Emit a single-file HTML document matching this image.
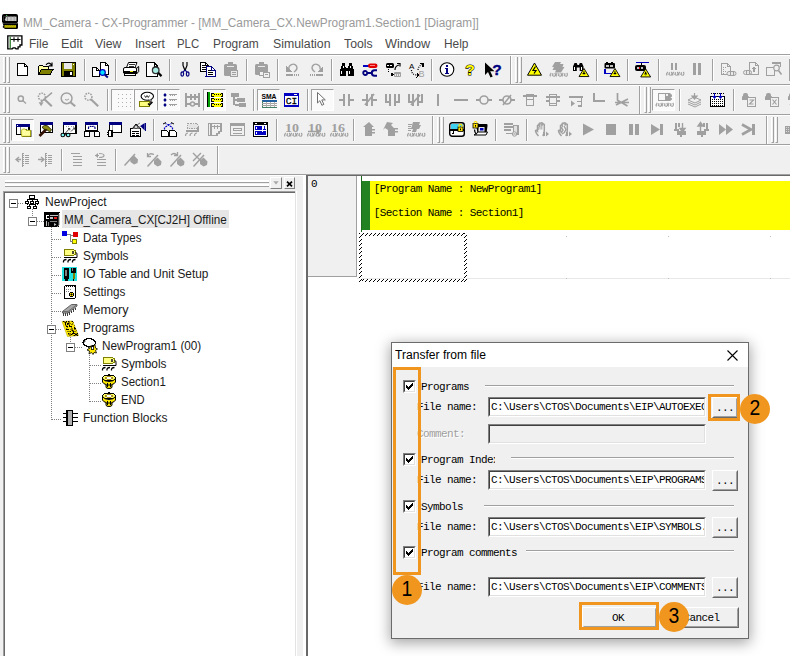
<!DOCTYPE html>
<html><head><meta charset="utf-8"><title>CX-Programmer</title><style>
*{margin:0;padding:0;box-sizing:border-box}
html,body{width:790px;height:656px;overflow:hidden;background:#f0f0f0}
body{position:relative;font-family:"Liberation Sans",sans-serif;font-size:12px;color:#000}
.a{position:absolute}
.t{position:absolute;white-space:nowrap;transform-origin:0 0;line-height:1}
.m{font-family:"Liberation Mono",monospace;font-size:11px;transform:scaleY(1.05);transform-origin:0 0;letter-spacing:-0.6px;white-space:pre;position:absolute;line-height:12px}
svg{position:absolute;overflow:visible}
.grip{position:absolute;width:3px;border-left:1px solid #fff;border-right:1px solid #a0a0a0;border-bottom:1px solid #a0a0a0;background:#f0f0f0}
.sep{position:absolute;width:2px;height:22px;border-left:1px solid #a0a0a0;border-right:1px solid #fff}
.chk{position:absolute;width:23px;height:22px;background:#fafafa;border:1px solid;border-color:#a0a0a0 #fff #fff #a0a0a0}
</style></head><body>
<div class="a" style="left:0px;top:0px;width:790px;height:53px;background:#fff"></div>
<div class="a" style="left:0px;top:53px;width:790px;height:1px;background:#fff"></div>
<div class="a" style="left:0px;top:54px;width:790px;height:1px;background:#a0a0a0"></div>
<div class="a" style="left:0px;top:55px;width:790px;height:1px;background:#fff"></div>
<svg style="left:2px;top:14px" width="16" height="16" viewBox="0 0 16 16"><rect x="0" y="0" width="16" height="9.3" rx="2" fill="#000"/><rect x="1.5" y="2.6" width="13" height="4.4" fill="#c8c8c8"/><rect x="5" y="2.6" width="1" height="4.4" fill="#8c8c8c"/><rect x="8.5" y="2.6" width="1" height="4.4" fill="#a4a4a4"/><rect x="11.7" y="2.6" width="1" height="4.4" fill="#a4a4a4"/><path d="M1.5 2.6h2.2v1.5l-1 1.5l1 1.400h-2.200z" fill="#000"/><rect x="4" y="1" width="1.200" height="1" fill="#50c050"/><path d="M.5 9.300h15.500v4.200q0 1.500-1.500 1.500h-11.500l-2.500-2l1-1.500z" fill="#000"/><rect x="2.500" y="11.200" width="11.500" height="2.400" fill="#e4dc00"/><path d="M3 13.600l2-2.400M5 13.600l2-2.400M7 13.600l2-2.400M9 13.600l2-2.400M11 13.600l2-2.400M13 13.600l1-1.200" stroke="#6a6400" stroke-width=".7"/></svg>
<svg style="left:7px;top:35px" width="16" height="16" viewBox="0 0 16 16"><path d="M.8 .8h14.100v9.200h-1.900v1.900h-1.900v1.900h-2.100l-.9-.9h-2l-.9.900h-4.400z" fill="#fff" stroke="#000" stroke-width="1.350"/><rect x="2.600" y="1.800" width="1.200" height="11.700" fill="#1c701c"/><path d="M3.700 4.500h9.800M7 2.300v4.400M11 2.300v4.400" stroke="#000" stroke-width="1.100" fill="none"/></svg>
<div class="a" style="left:0px;top:84px;width:790px;height:1px;background:#a0a0a0"></div>
<div class="a" style="left:0px;top:85px;width:790px;height:1px;background:#fff"></div>
<div class="a" style="left:0px;top:114px;width:790px;height:1px;background:#a0a0a0"></div>
<div class="a" style="left:0px;top:115px;width:790px;height:1px;background:#fff"></div>
<div class="a" style="left:0px;top:144px;width:790px;height:1px;background:#a0a0a0"></div>
<div class="a" style="left:0px;top:145px;width:790px;height:1px;background:#fff"></div>
<div class="a" style="left:0px;top:174px;width:790px;height:1px;background:#a0a0a0"></div>
<div class="a" style="left:0px;top:175px;width:790px;height:1px;background:#fff"></div>
<div class="grip" style="left:3px;top:57px;height:26px"></div>
<div class="grip" style="left:7px;top:57px;height:26px"></div>
<svg style="left:14.5px;top:62px" width="16" height="16" viewBox="0 0 16 16" ><path d="M2.5 1.5h7l3 3v9h-10z" stroke="#000" fill="#fff" stroke-width="1"  shape-rendering="crispEdges"/><path d="M9.5 1.5v3h3" stroke="#000" fill="none" stroke-width="1"  shape-rendering="crispEdges"/></svg>
<svg style="left:37.5px;top:62px" width="16" height="16" viewBox="0 0 16 16" ><path d="M.5 12.5v-8l1-1h3l1 1h5v2.5" stroke="#000" fill="#ffffa0" stroke-width="1"  shape-rendering="crispEdges"/><path d="M.5 12.5l3.2-5.5h11.8l-3.5 5.5z" stroke="#000" fill="#808000" stroke-width="1"  shape-rendering="crispEdges"/><path d="M8 2.800q3-3.500 5.500 .2M10.800 3.800h3.200v-3.200" stroke="#000" fill="none" stroke-width="1.2" shape-rendering="geometricPrecision"/></svg>
<svg style="left:60.5px;top:62px" width="16" height="16" viewBox="0 0 16 16" ><rect x="0" y="0" width="15" height="15" fill="#000" shape-rendering="crispEdges"/><rect x="1" y="1" width="13" height="13" fill="#808000" shape-rendering="crispEdges"/><rect x="3" y="1" width="8" height="6" fill="#e8e8e8" shape-rendering="crispEdges"/><rect x="3" y="9" width="9" height="5" fill="#000" shape-rendering="crispEdges"/><rect x="9" y="10" width="2" height="3" fill="#fff" shape-rendering="crispEdges"/><rect x="12" y="2" width="1" height="1" fill="#fff" shape-rendering="crispEdges"/></svg>
<div class="sep" style="left:84px;top:59px"></div>
<svg style="left:91.5px;top:62px" width="16" height="16" viewBox="0 0 16 16" ><path d="M8.5 .5h5l2.5 2.5v9.5h-7.5z" stroke="#000" fill="#fff" stroke-width="1"  shape-rendering="crispEdges"/><path d="M13.5 .5v2.5h2.5" stroke="#000" fill="none" stroke-width="1"  shape-rendering="crispEdges"/><path d="M.5 5.5h4l3 3v6h-7z" stroke="#000" fill="#fff" stroke-width="1"  shape-rendering="crispEdges"/><path d="M4.5 5.5v3h3" stroke="#000" fill="none" stroke-width="1"  shape-rendering="crispEdges"/><circle cx="10.5" cy="10.5" r="2.8" stroke="#0000c0" fill="#00e0ff" stroke-width="1.2"/><path d="M12.8 12.8l3 2.7" stroke="#000080" fill="none" stroke-width="2" shape-rendering="geometricPrecision"/></svg>
<div class="sep" style="left:115px;top:59px"></div>
<svg style="left:122.5px;top:62px" width="16" height="16" viewBox="0 0 16 16" ><path d="M3.5 5.5l2-5h8.5l-2 5z" stroke="#000" fill="#fff" stroke-width="1" shape-rendering="geometricPrecision"/><path d="M6.2 2.5h5.3M5.6 4h5.4" stroke="#000" fill="none" stroke-width="0.8"  shape-rendering="crispEdges"/><path d="M13.5 6l2.2-1.500v5l-2.200 2.500z" stroke="#000" fill="#d4d4d4" stroke-width="1" shape-rendering="geometricPrecision"/><path d="M.5 7q0-1.500 1.500-1.500h10q1.500 0 1.500 1.500v4h-13z" fill="#fff" stroke="#000"/><rect x="1" y="9" width="12" height="2" fill="#000" shape-rendering="crispEdges"/><rect x="7" y="9" width="3" height="1" fill="#e8e800" shape-rendering="crispEdges"/><path d="M1.5 11.5h11v2h-11z" stroke="#000" fill="#fff" stroke-width="1"  shape-rendering="crispEdges"/></svg>
<svg style="left:145.5px;top:62px" width="16" height="16" viewBox="0 0 16 16" ><path d="M.5 .5h7.5l3.5 3.500v10.500h-11z" stroke="#000" fill="#fff" stroke-width="1"  shape-rendering="crispEdges"/><path d="M8 .5v3.500h3.500" stroke="#000" fill="none" stroke-width="1"  shape-rendering="crispEdges"/><circle cx="9.7" cy="8.3" r="3.3" stroke="#303030" fill="#a8ece4" stroke-width="1.3"/><path d="M12.2 10.800l3.300 3.300" stroke="#000" fill="none" stroke-width="2.2" shape-rendering="geometricPrecision"/></svg>
<div class="sep" style="left:169px;top:59px"></div>
<svg style="left:176.5px;top:62px" width="16" height="16" viewBox="0 0 16 16" ><path d="M6 0v3.500l2 5M10 0v3.500l-2 5" stroke="#000" fill="none" stroke-width="1.2" shape-rendering="geometricPrecision"/><path d="M8 8l-1.800 1.800M8 8l1.800 1.800" stroke="#000080" fill="none" stroke-width="1.1" shape-rendering="geometricPrecision"/><ellipse cx="5.300" cy="12" rx="1.300" ry="2.200" stroke="#000080" fill="none" stroke-width="1.200"/><ellipse cx="10.700" cy="12" rx="1.300" ry="2.200" stroke="#000080" fill="none" stroke-width="1.200"/></svg>
<svg style="left:199.5px;top:62px" width="16" height="16" viewBox="0 0 16 16" ><path d="M.5 .5h5l3 3v6h-8z" stroke="#000" fill="#fff" stroke-width="1"  shape-rendering="crispEdges"/><path d="M5.5 .5v3h3M2 3.5h3M2 5.5h4M2 7.5h4" stroke="#000" fill="none" stroke-width="1"  shape-rendering="crispEdges"/><path d="M6.5 4.5h5l3.5 3.5v6.5h-9z" stroke="#000080" fill="#fff" stroke-width="1"  shape-rendering="crispEdges"/><path d="M11.5 4.5v3.5h3.5" stroke="#000080" fill="none" stroke-width="1"  shape-rendering="crispEdges"/><path d="M8 8.5h3M8 10.5h5M8 12.5h5" stroke="#000" fill="none" stroke-width="1"  shape-rendering="crispEdges"/></svg>
<svg style="left:222.5px;top:62px" width="16" height="16" viewBox="0 0 16 16" ><rect x="1" y="2" width="13" height="12" rx="1.5" fill="#a0a0a0"/><rect x="5" y="0" width="5" height="3" fill="#a0a0a0" shape-rendering="crispEdges"/><rect x="4" y="4" width="7" height="1" fill="#e8e8e8" shape-rendering="crispEdges"/><rect x="7" y="8" width="8" height="7" fill="#e8e8e8" shape-rendering="crispEdges"/><path d="M7.5 8.5h7v6h-7z" stroke="#a0a0a0" fill="none" stroke-width="1"  shape-rendering="crispEdges"/><rect x="9" y="10" width="4" height="1" fill="#a0a0a0" shape-rendering="crispEdges"/><rect x="9" y="12" width="4" height="1" fill="#a0a0a0" shape-rendering="crispEdges"/></svg>
<div class="sep" style="left:246px;top:59px"></div>
<svg style="left:253.5px;top:62px" width="16" height="16" viewBox="0 0 16 16" ><rect x="1" y="2" width="13" height="11" rx="1.5" fill="#a0a0a0"/><rect x="5" y="0" width="5" height="3" fill="#a0a0a0" shape-rendering="crispEdges"/><rect x="4" y="4" width="7" height="1" fill="#e8e8e8" shape-rendering="crispEdges"/><path d="M5.5 9.5h4v4h-4z" stroke="#a0a0a0" fill="#f0f0f0" stroke-width="1"  shape-rendering="crispEdges"/><path d="M9.5 10.5h5.5v4.5h-5.5z" stroke="#a0a0a0" fill="#f0f0f0" stroke-width="1"  shape-rendering="crispEdges"/><rect x="11" y="12" width="3" height="1" fill="#a0a0a0" shape-rendering="crispEdges"/></svg>
<div class="sep" style="left:277px;top:59px"></div>
<svg style="left:284.5px;top:62px" width="16" height="16" viewBox="0 0 16 16" ><path d="M4 7.5c-1-5 5-7 7.5-3.5c1.5 3-1 5-2.5 6" stroke="#a0a0a0" fill="none" stroke-width="1.4" shape-rendering="geometricPrecision"/><path d="M1 4v5.5h5.5z" stroke="#a0a0a0" fill="#a0a0a0" stroke-width="0"  shape-rendering="crispEdges"/><rect x="1" y="12" width="7" height="2" fill="#a0a0a0" shape-rendering="crispEdges"/><rect x="9" y="12" width="1" height="2" fill="#a0a0a0" shape-rendering="crispEdges"/><rect x="11" y="12" width="1" height="2" fill="#a0a0a0" shape-rendering="crispEdges"/><rect x="13" y="12" width="1" height="2" fill="#a0a0a0" shape-rendering="crispEdges"/></svg>
<svg style="left:307.5px;top:62px" width="16" height="16" viewBox="0 0 16 16" ><path d="M12 7.5c1-5-5-7-7.5-3.5c-1.5 3 1 5 2.5 6" stroke="#a0a0a0" fill="none" stroke-width="1.4" shape-rendering="geometricPrecision"/><path d="M15 4v5.5h-5.5z" stroke="#a0a0a0" fill="#a0a0a0" stroke-width="0"  shape-rendering="crispEdges"/><rect x="8" y="12" width="7" height="2" fill="#a0a0a0" shape-rendering="crispEdges"/><rect x="6" y="12" width="1" height="2" fill="#a0a0a0" shape-rendering="crispEdges"/><rect x="4" y="12" width="1" height="2" fill="#a0a0a0" shape-rendering="crispEdges"/><rect x="2" y="12" width="1" height="2" fill="#a0a0a0" shape-rendering="crispEdges"/></svg>
<div class="sep" style="left:331px;top:59px"></div>
<svg style="left:338.5px;top:62px" width="16" height="16" viewBox="0 0 16 16" ><path d="M1 14v-6l2-5v-2h3v2l1 3h2l1-3v-2h3v2l2 5v6h-6v-5h-2v5z" stroke="#000" fill="#000" stroke-width="0"  shape-rendering="crispEdges"/><rect x="2" y="9" width="1" height="3" fill="#fff" shape-rendering="crispEdges"/><rect x="10" y="9" width="1" height="3" fill="#fff" shape-rendering="crispEdges"/><rect x="4" y="4" width="1" height="2" fill="#fff" shape-rendering="crispEdges"/><rect x="11" y="4" width="1" height="2" fill="#fff" shape-rendering="crispEdges"/></svg>
<svg style="left:361.5px;top:62px" width="16" height="16" viewBox="0 0 16 16" ><rect x="1" y="2.5" width="7" height="2.5" fill="#0000c0" shape-rendering="crispEdges"/><rect x="6" y="1.500" width="9.500" height="4.500" rx="2.200" fill="#e00000"/><rect x="8" y="2.5" width="5" height="1" fill="#ff8080" shape-rendering="crispEdges"/><circle cx="3.2" cy="11" r="2" stroke="#000080" fill="none" stroke-width="1.8"/><rect x="5" y="9.8" width="5" height="2.5" fill="#000080" shape-rendering="crispEdges"/><path d="M15 8.300h-2.500a2.700 2.700 0 0 0 0 5.400h2.500" stroke="#000080" fill="none" stroke-width="2" shape-rendering="geometricPrecision"/></svg>
<svg style="left:384.5px;top:62px" width="16" height="16" viewBox="0 0 16 16" ><rect x="1" y="1" width="8" height="5" rx="1.5" fill="#000"/><rect x="2" y="3" width="2" height="1" fill="#fff" shape-rendering="crispEdges"/><rect x="5" y="3" width="2" height="1" fill="#fff" shape-rendering="crispEdges"/><path d="M3.5 7v2l3 3.5" stroke="#000" fill="none" stroke-width="1" stroke-dasharray="1 1" shape-rendering="crispEdges"/><path d="M6 10.5v4l3-2z" stroke="#000" fill="#000" stroke-width="0"  shape-rendering="crispEdges"/><rect x="9" y="10" width="7" height="5" rx="1" fill="#a0a0a0"/><rect x="10" y="12" width="1" height="2" fill="#e8e8e8" shape-rendering="crispEdges"/><rect x="12" y="12" width="1" height="2" fill="#e8e8e8" shape-rendering="crispEdges"/><rect x="14" y="12" width="1" height="2" fill="#e8e8e8" shape-rendering="crispEdges"/><path d="M10 8q0-4 4-5M12 1.5h3v3" stroke="#000" fill="none" stroke-width="1.2" shape-rendering="geometricPrecision"/></svg>
<svg style="left:407.5px;top:62px" width="16" height="16" viewBox="0 0 16 16" ><text x="1" y="6.5" font-family="Liberation Sans" font-size="8" fill="#000" text-anchor="start"  >A</text><text x="10.5" y="15" font-family="Liberation Sans" font-size="9" fill="#a0a0a0" text-anchor="start"  >B</text><path d="M3.5 8q0 4.5 5 5" stroke="#000" fill="none" stroke-width="1.2" stroke-dasharray="1 1.2" shape-rendering="geometricPrecision"/><path d="M8.5 10.5v5l3-2.5z" stroke="#000" fill="#000" stroke-width="0"  shape-rendering="crispEdges"/><path d="M10 8q.5-4 4-5.5" stroke="#000" fill="none" stroke-width="1.2" stroke-dasharray="1 1.2" shape-rendering="geometricPrecision"/><path d="M11.5 1.5h3.5v3.5" stroke="#000" fill="none" stroke-width="1.3"  shape-rendering="crispEdges"/></svg>
<div class="sep" style="left:431px;top:59px"></div>
<svg style="left:438.5px;top:62px" width="16" height="16" viewBox="0 0 16 16" ><circle cx="8" cy="7.5" r="6.8" stroke="#000" fill="#fff" stroke-width="1.1"/><rect x="7" y="3" width="2" height="2" fill="#000080" shape-rendering="crispEdges"/><rect x="6" y="6" width="3" height="1" fill="#000080" shape-rendering="crispEdges"/><rect x="7" y="6" width="2" height="5" fill="#000080" shape-rendering="crispEdges"/><rect x="6" y="11" width="4" height="1" fill="#000080" shape-rendering="crispEdges"/></svg>
<svg style="left:461.5px;top:62px" width="16" height="16" viewBox="0 0 16 16" ><text x="8" y="13" font-family="Liberation Sans" font-size="15.5" fill="#ffff00" text-anchor="middle" font-weight="bold" stroke="#000" stroke-width="1.100" paint-order="stroke" shape-rendering="geometricPrecision">?</text></svg>
<svg style="left:484.5px;top:62px" width="16" height="16" viewBox="0 0 16 16" ><path d="M0 .5v12.500l3-3l2.500 5.500l2.200-1l-2.500-5.200h4.300z" stroke="#000" fill="#000" stroke-width="0" shape-rendering="geometricPrecision"/><text x="12" y="12.5" font-family="Liberation Sans" font-size="15.5" fill="#000080" text-anchor="middle" font-weight="bold" stroke="#000080" stroke-width=".4" shape-rendering="geometricPrecision">?</text></svg>
<div class="a" style="left:510px;top:56px;width:1px;height:28px;background:#a0a0a0"></div>
<div class="a" style="left:511px;top:56px;width:1px;height:28px;background:#fff"></div>
<div class="grip" style="left:515px;top:57px;height:26px"></div>
<div class="grip" style="left:519px;top:57px;height:26px"></div>
<svg style="left:526.5px;top:62px" width="16" height="16" viewBox="0 0 16 16" ><g shape-rendering="geometricPrecision"><path d="M7.5 1L14.500 13.200H.5z" fill="#ffff00" stroke="#000" stroke-width="1" stroke-linejoin="round"/><path d="M8.5 4.5l-2.500 4h3l-2 3" stroke="#000" fill="none" stroke-width="1.2"/></g></svg>
<svg style="left:549.5px;top:62px" width="16" height="16" viewBox="0 0 16 16" ><path d="M5 0h6l-1 2h3.500l-1 3h2l-3.500 5.500h-6l1-2.500h-3.500l1.500-3h-2z" stroke="#a0a0a0" fill="#a0a0a0" stroke-width="0" shape-rendering="geometricPrecision"/><path d="M0.5 14.5q-1-1.7 .7-3.5M2.3 11.6q1.4 .2 0 1.6l1.5 1.2M4.7 11q1.7 1.8 -.5 3.6M6.5 14.5q-1-1.7 .7-3.5M8.3 11.6q1.4 .2 0 1.6l1.5 1.2M10.7 11q1.7 1.8 -.5 3.6M12.5 14.5q-1-1.7 .7-3.5M14.3 11.6q1.4 .2 0 1.6l1.5 1.2M16.7 11q1.7 1.8 -.5 3.6" stroke="#a0a0a0" fill="none" stroke-width="1.1" shape-rendering="geometricPrecision"/></svg>
<svg style="left:572.5px;top:62px" width="16" height="16" viewBox="0 0 16 16" ><path d="M0 9v-4.500l1.500-3.500h2.200l.8 2h1.500l.8-2h2.200l1.500 3.500v4.500h-3.800v-3.500h-2.900v3.500z" stroke="#000" fill="#000" stroke-width="0" shape-rendering="geometricPrecision"/><rect x="1" y="5" width="1" height="2.5" fill="#fff" shape-rendering="crispEdges"/><rect x="7.5" y="5" width="1" height="2.5" fill="#fff" shape-rendering="crispEdges"/><g transform="translate(5.8 5.8) scale(1.15)" shape-rendering="geometricPrecision"><path d="M4.5 .6L8.800 7.600H.2z" fill="#ffff00" stroke="#000" stroke-width=".8" stroke-linejoin="round"/><path d="M4.5 3v2.2M3.3 5h2.4M4.5 6.4v.1" stroke="#000" stroke-width="1" fill="none"/></g></svg>
<div class="sep" style="left:596px;top:59px"></div>
<svg style="left:603.5px;top:62px" width="16" height="16" viewBox="0 0 16 16" ><rect x="0.500" y="1" width="10.500" height="5.500" rx="1" fill="#000"/><rect x="2" y="0" width="2" height="1" fill="#000" shape-rendering="crispEdges"/><rect x="7" y="0" width="2" height="1" fill="#000" shape-rendering="crispEdges"/><rect x="2" y="3" width="2.5" height="2" fill="#c0c0c0" shape-rendering="crispEdges"/><rect x="6" y="3" width="2.5" height="2" fill="#c0c0c0" shape-rendering="crispEdges"/><path d="M1.200 6.500v5h6.500" stroke="#0000c0" fill="none" stroke-width="1.5"  shape-rendering="crispEdges"/><g transform="translate(5.8 5.8) scale(1.15)" shape-rendering="geometricPrecision"><path d="M4.5 .6L8.800 7.600H.2z" fill="#ffff00" stroke="#000" stroke-width=".8" stroke-linejoin="round"/><path d="M4.5 3v2.2M3.3 5h2.4M4.5 6.4v.1" stroke="#000" stroke-width="1" fill="none"/></g></svg>
<div class="sep" style="left:627px;top:59px"></div>
<svg style="left:634.5px;top:62px" width="16" height="16" viewBox="0 0 16 16" ><rect x="1" y="0" width="13" height="1.4" fill="#0000c0" shape-rendering="crispEdges"/><rect x="6" y="1" width="1.2" height="2" fill="#000" shape-rendering="crispEdges"/><rect x="0" y="3" width="11" height="6" rx="2" fill="#000"/><rect x="2" y="5" width="2" height="2" fill="#c0c0c0" shape-rendering="crispEdges"/><rect x="4.2" y="5" width="1" height="2" fill="#e00000" shape-rendering="crispEdges"/><rect x="6" y="5" width="2" height="2" fill="#c0c0c0" shape-rendering="crispEdges"/><g transform="translate(5.5 6.2) scale(1.15)" shape-rendering="geometricPrecision"><path d="M4.5 .6L8.800 7.600H.2z" fill="#ffff00" stroke="#000" stroke-width=".8" stroke-linejoin="round"/><path d="M4.5 3v2.2M3.3 5h2.4M4.5 6.4v.1" stroke="#000" stroke-width="1" fill="none"/></g></svg>
<div class="sep" style="left:658px;top:59px"></div>
<svg style="left:665.5px;top:62px" width="16" height="16" viewBox="0 0 16 16" ><rect x="5" y="1" width="2" height="7" fill="#a0a0a0" shape-rendering="crispEdges"/><rect x="9" y="1" width="2" height="7" fill="#a0a0a0" shape-rendering="crispEdges"/><path d="M1 13.5q-1-1.7 .7-3.5M2.8 10.6q1.4 .2 0 1.6l1.5 1.2M5.2 10q1.7 1.8 -.5 3.6M7 13.5q-1-1.7 .7-3.5M8.8 10.6q1.4 .2 0 1.6l1.5 1.2M11.2 10q1.7 1.8 -.5 3.6M13 13.5q-1-1.7 .7-3.5M14.8 10.6q1.4 .2 0 1.6l1.5 1.2M17.2 10q1.7 1.8 -.5 3.6" stroke="#a0a0a0" fill="none" stroke-width="1.1" shape-rendering="geometricPrecision"/></svg>
<svg style="left:688.5px;top:62px" width="16" height="16" viewBox="0 0 16 16" ><rect x="4" y="1" width="3" height="12" fill="#a0a0a0" shape-rendering="crispEdges"/><rect x="9" y="1" width="3" height="12" fill="#a0a0a0" shape-rendering="crispEdges"/></svg>
<div class="sep" style="left:712px;top:59px"></div>
<svg style="left:719.5px;top:62px" width="16" height="16" viewBox="0 0 16 16" ><path d="M1.5 1.5h6l3 3v8h-9z" stroke="#a0a0a0" fill="none" stroke-width="1"  shape-rendering="crispEdges"/><path d="M7.5 1.5v3h3" stroke="#a0a0a0" fill="none" stroke-width="1"  shape-rendering="crispEdges"/><path d="M3 5h3M3 7h2M3 9h3M3 11h2" stroke="#a0a0a0" fill="none" stroke-width="1" stroke-dasharray="1 1" shape-rendering="crispEdges"/><rect x="7" y="9.5" width="9" height="4" rx="2" fill="#e8e8e8" stroke="#a0a0a0"/><rect x="10" y="10" width="1" height="3" fill="#a0a0a0" shape-rendering="crispEdges"/><rect x="13" y="10" width="1" height="3" fill="#a0a0a0" shape-rendering="crispEdges"/></svg>
<svg style="left:742.5px;top:62px" width="16" height="16" viewBox="0 0 16 16" ><path d="M6.5 .5h6l3 3v9h-9z" stroke="#a0a0a0" fill="none" stroke-width="1"  shape-rendering="crispEdges"/><path d="M12.5 .5v3h3" stroke="#a0a0a0" fill="none" stroke-width="1"  shape-rendering="crispEdges"/><path d="M11 10v-5M9 7l2-2l2 2" stroke="#a0a0a0" fill="none" stroke-width="1.2"  shape-rendering="crispEdges"/><rect x="0.5" y="8.5" width="8" height="4" rx="2" fill="#e8e8e8" stroke="#a0a0a0"/><rect x="3" y="9" width="1" height="3" fill="#a0a0a0" shape-rendering="crispEdges"/><rect x="6" y="9" width="1" height="3" fill="#a0a0a0" shape-rendering="crispEdges"/></svg>
<svg style="left:765.5px;top:62px" width="16" height="16" viewBox="0 0 16 16" ><path d="M.5 5.5h8v8h-8z" stroke="#a0a0a0" fill="#f0f0f0" stroke-width="1"  shape-rendering="crispEdges"/><path d="M6.5 .5h8v4" stroke="#a0a0a0" fill="none" stroke-width="1"  shape-rendering="crispEdges"/><rect x="6" y="0" width="9" height="2" fill="#a0a0a0" shape-rendering="crispEdges"/><circle cx="10.5" cy="6" r="2.8" stroke="#a0a0a0" fill="#f0f0f0" stroke-width="1.2"/><path d="M12.5 8.5l3 4" stroke="#a0a0a0" fill="none" stroke-width="1.6" shape-rendering="geometricPrecision"/></svg>
<div class="sep" style="left:789px;top:59px"></div>
<div class="grip" style="left:3px;top:87px;height:26px"></div>
<div class="grip" style="left:7px;top:87px;height:26px"></div>
<svg style="left:14.5px;top:92px" width="16" height="16" viewBox="0 0 16 16" ><circle cx="5.8" cy="6.7" r="2.6" stroke="#a0a0a0" fill="none" stroke-width="1.5" /><path d="M7.672 8.572L11 11.5" stroke="#a0a0a0" fill="none" stroke-width="1.3" shape-rendering="geometricPrecision"/></svg>
<svg style="left:37.5px;top:92px" width="16" height="16" viewBox="0 0 16 16" ><circle cx="3.9" cy="4.7" r="3.5" stroke="#a0a0a0" fill="none" stroke-width="1.5" stroke-dasharray="1.6 1" /><path d="M6.42 7.220000000000001L13.8 14.2" stroke="#a0a0a0" fill="none" stroke-width="2.1" shape-rendering="geometricPrecision"/><path d="M14 .6L3 10" stroke="#a0a0a0" fill="none" stroke-width="1.5" shape-rendering="geometricPrecision"/><path d="M.6 10.300h5l-2.500 4z" stroke="#a0a0a0" fill="#a0a0a0" stroke-width="0" shape-rendering="geometricPrecision"/></svg>
<svg style="left:60.5px;top:92px" width="16" height="16" viewBox="0 0 16 16" ><circle cx="5.6" cy="6.3" r="5.4" stroke="#a0a0a0" fill="none" stroke-width="1.5" /><path d="M9.488 10.187999999999999L14.2 14.2" stroke="#a0a0a0" fill="none" stroke-width="2.1" shape-rendering="geometricPrecision"/><path d="M4 7.500q2 1.500 4-.5" stroke="#a0a0a0" fill="none" stroke-width="1" shape-rendering="geometricPrecision"/></svg>
<svg style="left:83.5px;top:92px" width="16" height="16" viewBox="0 0 16 16" ><circle cx="4.4" cy="4.7" r="3.5" stroke="#a0a0a0" fill="none" stroke-width="1.5" stroke-dasharray="1.6 1" /><path d="M6.92 7.220000000000001L14.2 14.2" stroke="#a0a0a0" fill="none" stroke-width="2.1" shape-rendering="geometricPrecision"/></svg>
<div class="sep" style="left:107px;top:89px"></div>
<div class="chk" style="left:111.0px;top:89px"></div>
<svg style="left:114.5px;top:92px" width="16" height="16" viewBox="0 0 16 16" ><rect x="3" y="2" width="1" height="1" fill="#b0b0b0" shape-rendering="crispEdges"/><rect x="3" y="6" width="1" height="1" fill="#b0b0b0" shape-rendering="crispEdges"/><rect x="3" y="10" width="1" height="1" fill="#b0b0b0" shape-rendering="crispEdges"/><rect x="3" y="14" width="1" height="1" fill="#b0b0b0" shape-rendering="crispEdges"/><rect x="7" y="2" width="1" height="1" fill="#b0b0b0" shape-rendering="crispEdges"/><rect x="7" y="6" width="1" height="1" fill="#b0b0b0" shape-rendering="crispEdges"/><rect x="7" y="10" width="1" height="1" fill="#b0b0b0" shape-rendering="crispEdges"/><rect x="7" y="14" width="1" height="1" fill="#b0b0b0" shape-rendering="crispEdges"/><rect x="11" y="2" width="1" height="1" fill="#b0b0b0" shape-rendering="crispEdges"/><rect x="11" y="6" width="1" height="1" fill="#b0b0b0" shape-rendering="crispEdges"/><rect x="11" y="10" width="1" height="1" fill="#b0b0b0" shape-rendering="crispEdges"/><rect x="11" y="14" width="1" height="1" fill="#b0b0b0" shape-rendering="crispEdges"/><rect x="15" y="2" width="1" height="1" fill="#b0b0b0" shape-rendering="crispEdges"/><rect x="15" y="6" width="1" height="1" fill="#b0b0b0" shape-rendering="crispEdges"/><rect x="15" y="10" width="1" height="1" fill="#b0b0b0" shape-rendering="crispEdges"/><rect x="15" y="14" width="1" height="1" fill="#b0b0b0" shape-rendering="crispEdges"/></svg>
<div class="chk" style="left:134.0px;top:89px"></div>
<svg style="left:137.5px;top:92px" width="16" height="16" viewBox="0 0 16 16" ><ellipse cx="9.3" cy="4.3" rx="6.2" ry="4" fill="#fff" stroke="#000" stroke-width="1.1"/><path d="M10.500 7.800l2.500 3l0-3.500" stroke="#000" fill="#fff" stroke-width="1" shape-rendering="geometricPrecision"/><path d="M6.5 3.500l1.200 2l1.300-2l1.300 2l1.200-2" stroke="#000" fill="none" stroke-width="0.8" shape-rendering="geometricPrecision"/><path d="M1.5 9.5h10v5h-10z" stroke="#808000" fill="#ffff80" stroke-width="1.2"  shape-rendering="crispEdges"/><path d="M10 11.5l1.500 1.500l3-3" stroke="#000" fill="none" stroke-width="1.4" shape-rendering="geometricPrecision"/></svg>
<div class="chk" style="left:157.0px;top:89px"></div>
<svg style="left:160.5px;top:92px" width="16" height="16" viewBox="0 0 16 16" ><path d="M2.3 3.0l1.700-2l1.700 2l-1.700 2z" stroke="#000080" fill="#000080" stroke-width="0" shape-rendering="geometricPrecision"/><path d="M2.3 8.0l1.700-2l1.700 2l-1.700 2z" stroke="#000080" fill="#000080" stroke-width="0" shape-rendering="geometricPrecision"/><path d="M2.3 13.0l1.700-2l1.700 2l-1.700 2z" stroke="#000080" fill="#000080" stroke-width="0" shape-rendering="geometricPrecision"/><rect x="8" y="2" width="8" height="1" fill="#a0a0a0" shape-rendering="crispEdges"/><rect x="9" y="3" width="1" height="1" fill="#a0a0a0" shape-rendering="crispEdges"/><rect x="11" y="3" width="1" height="1" fill="#a0a0a0" shape-rendering="crispEdges"/><rect x="13" y="3" width="1" height="1" fill="#a0a0a0" shape-rendering="crispEdges"/><rect x="8" y="7" width="8" height="1" fill="#a0a0a0" shape-rendering="crispEdges"/><rect x="9" y="8" width="1" height="1" fill="#a0a0a0" shape-rendering="crispEdges"/><rect x="11" y="8" width="1" height="1" fill="#a0a0a0" shape-rendering="crispEdges"/><rect x="13" y="8" width="1" height="1" fill="#a0a0a0" shape-rendering="crispEdges"/><rect x="8" y="12" width="8" height="1" fill="#a0a0a0" shape-rendering="crispEdges"/><rect x="9" y="13" width="1" height="1" fill="#a0a0a0" shape-rendering="crispEdges"/><rect x="11" y="13" width="1" height="1" fill="#a0a0a0" shape-rendering="crispEdges"/><rect x="13" y="13" width="1" height="1" fill="#a0a0a0" shape-rendering="crispEdges"/></svg>
<svg style="left:183.5px;top:92px" width="16" height="16" viewBox="0 0 16 16" ><rect x="1" y="1" width="2" height="14" fill="#a0a0a0" shape-rendering="crispEdges"/><rect x="14" y="1" width="2" height="14" fill="#a0a0a0" shape-rendering="crispEdges"/><rect x="3" y="4" width="11" height="2" fill="#a0a0a0" shape-rendering="crispEdges"/><rect x="6" y="2" width="2" height="6" fill="#a0a0a0" shape-rendering="crispEdges"/><rect x="10" y="2" width="2" height="6" fill="#a0a0a0" shape-rendering="crispEdges"/><rect x="3" y="11" width="4" height="2" fill="#a0a0a0" shape-rendering="crispEdges"/><rect x="11" y="11" width="3" height="2" fill="#a0a0a0" shape-rendering="crispEdges"/><circle cx="8.5" cy="12" r="2" stroke="#a0a0a0" fill="none" stroke-width="1.5"/></svg>
<div class="chk" style="left:203.0px;top:89px"></div>
<svg style="left:206.5px;top:92px" width="16" height="16" viewBox="0 0 16 16" ><rect x="0" y="0" width="1" height="15" fill="#000" shape-rendering="crispEdges"/><rect x="1" y="0" width="2" height="15" fill="#00a000" shape-rendering="crispEdges"/><rect x="4" y="0.5" width="12" height="4" fill="#ffff00" shape-rendering="crispEdges"/><path d="M6.5 1.0h-2v3h2M13.5 1.0h2v3h-2" stroke="#000" fill="none" stroke-width="1"  shape-rendering="crispEdges"/><rect x="7" y="2.0" width="1" height="1" fill="#000" shape-rendering="crispEdges"/><rect x="9" y="2.0" width="1" height="1" fill="#000" shape-rendering="crispEdges"/><rect x="11" y="2.0" width="1" height="1" fill="#000" shape-rendering="crispEdges"/><rect x="13" y="2.0" width="1" height="1" fill="#000" shape-rendering="crispEdges"/><rect x="4" y="5.5" width="12" height="4" fill="#ffff00" shape-rendering="crispEdges"/><path d="M6.5 6.0h-2v3h2M13.5 6.0h2v3h-2" stroke="#000" fill="none" stroke-width="1"  shape-rendering="crispEdges"/><rect x="7" y="7.0" width="1" height="1" fill="#000" shape-rendering="crispEdges"/><rect x="9" y="7.0" width="1" height="1" fill="#000" shape-rendering="crispEdges"/><rect x="11" y="7.0" width="1" height="1" fill="#000" shape-rendering="crispEdges"/><rect x="13" y="7.0" width="1" height="1" fill="#000" shape-rendering="crispEdges"/><rect x="4" y="10.5" width="12" height="4" fill="#ffff00" shape-rendering="crispEdges"/><path d="M6.5 11.0h-2v3h2M13.5 11.0h2v3h-2" stroke="#000" fill="none" stroke-width="1"  shape-rendering="crispEdges"/><rect x="7" y="12.0" width="1" height="1" fill="#000" shape-rendering="crispEdges"/><rect x="9" y="12.0" width="1" height="1" fill="#000" shape-rendering="crispEdges"/><rect x="11" y="12.0" width="1" height="1" fill="#000" shape-rendering="crispEdges"/><rect x="13" y="12.0" width="1" height="1" fill="#000" shape-rendering="crispEdges"/></svg>
<svg style="left:229.5px;top:92px" width="16" height="16" viewBox="0 0 16 16" ><rect x="1" y="1" width="8" height="4" fill="#a0a0a0" shape-rendering="crispEdges"/><rect x="3" y="5" width="2" height="8" fill="#a0a0a0" shape-rendering="crispEdges"/><rect x="5" y="7" width="3" height="2" fill="#a0a0a0" shape-rendering="crispEdges"/><rect x="7" y="6" width="8" height="4" fill="#a0a0a0" shape-rendering="crispEdges"/><rect x="5" y="12" width="5" height="2" fill="#a0a0a0" shape-rendering="crispEdges"/><rect x="9" y="11" width="7" height="4" fill="#a0a0a0" shape-rendering="crispEdges"/></svg>
<div class="sep" style="left:253px;top:89px"></div>
<div class="chk" style="left:257.0px;top:89px"></div>
<svg style="left:260.5px;top:92px" width="16" height="16" viewBox="0 0 16 16" ><text x="8" y="7" font-family="Liberation Sans" font-size="7.5" fill="#000" text-anchor="middle" font-weight="bold" textLength="15" lengthAdjust="spacingAndGlyphs">SMA</text><rect x="1" y="8" width="15" height="1.5" fill="#2060a0" shape-rendering="crispEdges"/><rect x="3" y="8" width="1" height="2" fill="#2060a0" shape-rendering="crispEdges"/><rect x="6" y="8" width="1" height="2" fill="#2060a0" shape-rendering="crispEdges"/><rect x="9" y="8" width="1" height="2" fill="#2060a0" shape-rendering="crispEdges"/><rect x="12" y="8" width="1" height="2" fill="#2060a0" shape-rendering="crispEdges"/><rect x="1" y="9" width="1" height="6" fill="#408060" shape-rendering="crispEdges"/><rect x="1" y="11" width="15" height="1" fill="#a0a0a0" shape-rendering="crispEdges"/><rect x="1" y="13" width="15" height="1" fill="#a0a0a0" shape-rendering="crispEdges"/><rect x="1" y="15" width="15" height="1" fill="#408060" shape-rendering="crispEdges"/><rect x="5" y="10" width="1" height="5" fill="#b0b0b0" shape-rendering="crispEdges"/><rect x="9" y="10" width="1" height="5" fill="#b0b0b0" shape-rendering="crispEdges"/><rect x="13" y="10" width="1" height="5" fill="#b0b0b0" shape-rendering="crispEdges"/></svg>
<svg style="left:283.5px;top:92px" width="16" height="16" viewBox="0 0 16 16" ><path d="M.5 1.5h14v12h-14z" stroke="#0000c0" fill="#fff" stroke-width="1"  shape-rendering="crispEdges"/><rect x="0" y="1" width="15" height="2.6" fill="#0000c0" shape-rendering="crispEdges"/><rect x="10" y="2" width="3" height="1" fill="#fff" shape-rendering="crispEdges"/><text x="7.5" y="11.5" font-family="Liberation Mono" font-size="9.5" fill="#000" text-anchor="middle"   textLength="11.500" lengthAdjust="spacingAndGlyphs" stroke="#000" stroke-width=".3">CI</text><rect x="0" y="13" width="15" height="1.5" fill="#0000c0" shape-rendering="crispEdges"/></svg>
<div class="sep" style="left:307px;top:89px"></div>
<div class="chk" style="left:311.0px;top:89px"></div>
<svg style="left:314.5px;top:92px" width="16" height="16" viewBox="0 0 16 16" ><path d="M2.500 .5v10.500l2.400-2.300l2 4.600l1.900-.9l-2-4.500h3.500z" stroke="#707070" fill="#fff" stroke-width="1" shape-rendering="geometricPrecision"/></svg>
<svg style="left:337.5px;top:92px" width="16" height="16" viewBox="0 0 16 16" ><rect x="1" y="7" width="5" height="2" fill="#a0a0a0" shape-rendering="crispEdges"/><rect x="5" y="2" width="2" height="12" fill="#a0a0a0" shape-rendering="crispEdges"/><rect x="10" y="2" width="2" height="12" fill="#a0a0a0" shape-rendering="crispEdges"/><rect x="11" y="7" width="5" height="2" fill="#a0a0a0" shape-rendering="crispEdges"/></svg>
<svg style="left:360.5px;top:92px" width="16" height="16" viewBox="0 0 16 16" ><rect x="1" y="7" width="5" height="2" fill="#a0a0a0" shape-rendering="crispEdges"/><rect x="5" y="2" width="2" height="12" fill="#a0a0a0" shape-rendering="crispEdges"/><rect x="10" y="2" width="2" height="12" fill="#a0a0a0" shape-rendering="crispEdges"/><rect x="11" y="7" width="5" height="2" fill="#a0a0a0" shape-rendering="crispEdges"/><path d="M4 13L13 2" stroke="#a0a0a0" fill="none" stroke-width="1.8" shape-rendering="geometricPrecision"/></svg>
<svg style="left:383.5px;top:92px" width="16" height="16" viewBox="0 0 16 16" ><path d="M2 2v7.5h3.5M5.5 2v12M10.5 2v12M10.5 9.5h4v-7.5" stroke="#a0a0a0" fill="none" stroke-width="2"  shape-rendering="crispEdges"/></svg>
<svg style="left:406.5px;top:92px" width="16" height="16" viewBox="0 0 16 16" ><path d="M2 2v7.5h3.5M5.5 2v12M10.5 2v12M10.5 9.5h4v-7.5" stroke="#a0a0a0" fill="none" stroke-width="2"  shape-rendering="crispEdges"/><path d="M4 13L13 3" stroke="#a0a0a0" fill="none" stroke-width="1.8" shape-rendering="geometricPrecision"/></svg>
<svg style="left:429.5px;top:92px" width="16" height="16" viewBox="0 0 16 16" ><rect x="7" y="2" width="2" height="12" fill="#a0a0a0" shape-rendering="crispEdges"/></svg>
<svg style="left:452.5px;top:92px" width="16" height="16" viewBox="0 0 16 16" ><rect x="1" y="7" width="14" height="2" fill="#a0a0a0" shape-rendering="crispEdges"/></svg>
<svg style="left:475.5px;top:92px" width="16" height="16" viewBox="0 0 16 16" ><rect x="0" y="7" width="4" height="2" fill="#a0a0a0" shape-rendering="crispEdges"/><rect x="12" y="7" width="4" height="2" fill="#a0a0a0" shape-rendering="crispEdges"/><circle cx="8" cy="8" r="4" stroke="#a0a0a0" fill="none" stroke-width="1.6"/></svg>
<svg style="left:498.5px;top:92px" width="16" height="16" viewBox="0 0 16 16" ><rect x="0" y="7" width="4" height="2" fill="#a0a0a0" shape-rendering="crispEdges"/><rect x="12" y="7" width="4" height="2" fill="#a0a0a0" shape-rendering="crispEdges"/><circle cx="8" cy="8" r="4" stroke="#a0a0a0" fill="none" stroke-width="1.6"/><path d="M4 13L12 3" stroke="#a0a0a0" fill="none" stroke-width="1.6" shape-rendering="geometricPrecision"/></svg>
<svg style="left:521.5px;top:92px" width="16" height="16" viewBox="0 0 16 16" ><path d="M4.5 2.5h7v11h-7z" stroke="#a0a0a0" fill="none" stroke-width="1.6"  shape-rendering="crispEdges"/><rect x="1" y="3" width="14" height="1.6" fill="#a0a0a0" shape-rendering="crispEdges"/><rect x="4" y="7" width="8" height="1.3" fill="#a0a0a0" shape-rendering="crispEdges"/></svg>
<svg style="left:544.5px;top:92px" width="16" height="16" viewBox="0 0 16 16" ><path d="M4.5 2.5h7v11h-7z" stroke="#a0a0a0" fill="none" stroke-width="1.6"  shape-rendering="crispEdges"/><rect x="1" y="4" width="14" height="1.5" fill="#a0a0a0" shape-rendering="crispEdges"/><rect x="1" y="8" width="4" height="1.5" fill="#a0a0a0" shape-rendering="crispEdges"/><rect x="11" y="8" width="4" height="1.5" fill="#a0a0a0" shape-rendering="crispEdges"/><rect x="4" y="11" width="8" height="1.2" fill="#a0a0a0" shape-rendering="crispEdges"/></svg>
<svg style="left:567.5px;top:92px" width="16" height="16" viewBox="0 0 16 16" ><rect x="1" y="4" width="14" height="1.6" fill="#a0a0a0" shape-rendering="crispEdges"/><path d="M13.5 4v10h-4" stroke="#a0a0a0" fill="none" stroke-width="1.6"  shape-rendering="crispEdges"/><rect x="9" y="9" width="5" height="1.4" fill="#a0a0a0" shape-rendering="crispEdges"/><path d="M3 8.5v6l4-3z" stroke="#a0a0a0" fill="#a0a0a0" stroke-width="0" shape-rendering="geometricPrecision"/></svg>
<svg style="left:590.5px;top:92px" width="16" height="16" viewBox="0 0 16 16" ><path d="M3 1v8h11" stroke="#a0a0a0" fill="none" stroke-width="2"  shape-rendering="crispEdges"/></svg>
<svg style="left:613.5px;top:92px" width="16" height="16" viewBox="0 0 16 16" ><path d="M3.500 1v7M3 8l10.500 6M2 13l12-6M1 10.500h14" stroke="#a0a0a0" fill="none" stroke-width="1.7" shape-rendering="geometricPrecision"/></svg>
<div class="a" style="left:639px;top:86px;width:1px;height:28px;background:#a0a0a0"></div>
<div class="a" style="left:640px;top:86px;width:1px;height:28px;background:#fff"></div>
<div class="grip" style="left:644px;top:87px;height:26px"></div>
<div class="grip" style="left:648px;top:87px;height:26px"></div>
<div class="chk" style="left:652.0px;top:89px"></div>
<svg style="left:655.5px;top:92px" width="16" height="16" viewBox="0 0 16 16" ><path d="M2.5 1.5h7v7h-7z" stroke="#a0a0a0" fill="#f8f8f8" stroke-width="1.2"  shape-rendering="crispEdges"/><path d="M9.5 1h4.500l2 2v1.500l-1.500 1l1.500 1v1l-2 1.500h-4.500z" stroke="#a0a0a0" fill="#a0a0a0" stroke-width="0" shape-rendering="geometricPrecision"/><rect x="10" y="2" width="1.5" height="1.5" fill="#f0f0f0" shape-rendering="crispEdges"/><path d="M0.5 14.5q-1-1.7 .7-3.5M2.3 11.6q1.4 .2 0 1.6l1.5 1.2M4.7 11q1.7 1.8 -.5 3.6M6.5 14.5q-1-1.7 .7-3.5M8.3 11.6q1.4 .2 0 1.6l1.5 1.2M10.7 11q1.7 1.8 -.5 3.6M12.5 14.5q-1-1.7 .7-3.5M14.3 11.6q1.4 .2 0 1.6l1.5 1.2M16.7 11q1.7 1.8 -.5 3.6" stroke="#a0a0a0" fill="none" stroke-width="1.1" shape-rendering="geometricPrecision"/></svg>
<div class="sep" style="left:679px;top:89px"></div>
<svg style="left:686.5px;top:92px" width="16" height="16" viewBox="0 0 16 16" ><path d="M1 8l6-3l7 3l-6 3z" stroke="#a0a0a0" fill="#f0f0f0" stroke-width="1" shape-rendering="geometricPrecision"/><path d="M1 10l7 3l6-3M1 12l7 3l6-3" stroke="#a0a0a0" fill="none" stroke-width="1" shape-rendering="geometricPrecision"/><path d="M7.5 1v5M5 4l2.5 3l2.5-3z" stroke="#a0a0a0" fill="#a0a0a0" stroke-width="1.2" shape-rendering="geometricPrecision"/></svg>
<svg style="left:709.5px;top:92px" width="16" height="16" viewBox="0 0 16 16" ><path d="M.5 4.5h14v10h-14z" stroke="#000" fill="#fff" stroke-width="1"  shape-rendering="crispEdges"/><rect x="2" y="7" width="1" height="1" fill="#000" shape-rendering="crispEdges"/><rect x="2" y="9" width="1" height="1" fill="#000" shape-rendering="crispEdges"/><rect x="2" y="11" width="1" height="1" fill="#000" shape-rendering="crispEdges"/><rect x="2" y="13" width="1" height="1" fill="#000" shape-rendering="crispEdges"/><rect x="4" y="7" width="1" height="1" fill="#000" shape-rendering="crispEdges"/><rect x="4" y="9" width="1" height="1" fill="#000" shape-rendering="crispEdges"/><rect x="4" y="11" width="1" height="1" fill="#000" shape-rendering="crispEdges"/><rect x="4" y="13" width="1" height="1" fill="#000" shape-rendering="crispEdges"/><rect x="6" y="7" width="1" height="1" fill="#000" shape-rendering="crispEdges"/><rect x="6" y="9" width="1" height="1" fill="#000" shape-rendering="crispEdges"/><rect x="6" y="11" width="1" height="1" fill="#000" shape-rendering="crispEdges"/><rect x="6" y="13" width="1" height="1" fill="#000" shape-rendering="crispEdges"/><rect x="8" y="7" width="1" height="1" fill="#000" shape-rendering="crispEdges"/><rect x="8" y="9" width="1" height="1" fill="#000" shape-rendering="crispEdges"/><rect x="8" y="11" width="1" height="1" fill="#000" shape-rendering="crispEdges"/><rect x="8" y="13" width="1" height="1" fill="#000" shape-rendering="crispEdges"/><rect x="10" y="7" width="1" height="1" fill="#000" shape-rendering="crispEdges"/><rect x="10" y="9" width="1" height="1" fill="#000" shape-rendering="crispEdges"/><rect x="10" y="11" width="1" height="1" fill="#000" shape-rendering="crispEdges"/><rect x="10" y="13" width="1" height="1" fill="#000" shape-rendering="crispEdges"/><rect x="12" y="7" width="1" height="1" fill="#000" shape-rendering="crispEdges"/><rect x="12" y="9" width="1" height="1" fill="#000" shape-rendering="crispEdges"/><rect x="12" y="11" width="1" height="1" fill="#000" shape-rendering="crispEdges"/><rect x="12" y="13" width="1" height="1" fill="#000" shape-rendering="crispEdges"/><rect x="1" y="1" width="1" height="1" fill="#000" shape-rendering="crispEdges"/><rect x="3" y="1" width="1" height="1" fill="#000" shape-rendering="crispEdges"/><rect x="5" y="1" width="1" height="1" fill="#000" shape-rendering="crispEdges"/><rect x="7" y="1" width="1" height="1" fill="#000" shape-rendering="crispEdges"/><rect x="9" y="1" width="1" height="1" fill="#000" shape-rendering="crispEdges"/><rect x="11" y="1" width="1" height="1" fill="#000" shape-rendering="crispEdges"/><rect x="13" y="1" width="1" height="1" fill="#000" shape-rendering="crispEdges"/><path d="M4.5 1v4M10.5 1v4" stroke="#0000c0" fill="none" stroke-width="1.6"  shape-rendering="crispEdges"/><path d="M2 4h5l-2.5 3zM8 4h5l-2.5 3z" stroke="#0000c0" fill="#0000c0" stroke-width="0" shape-rendering="geometricPrecision"/></svg>
<div class="sep" style="left:733px;top:89px"></div>
<svg style="left:740.5px;top:92px" width="16" height="16" viewBox="0 0 16 16" ><path d="M1 8v-3q0-1 1-1v-1q0-2 2-2h1q2 0 2 2v1q1 0 1 1v3z" fill="#a0a0a0" shape-rendering="geometricPrecision"/><path d="M6.5 5.5h8v9h-8z" stroke="#a0a0a0" fill="#f0f0f0" stroke-width="1.2"  shape-rendering="crispEdges"/><path d="M8.5 8h4l-4 4h4" stroke="#a0a0a0" fill="none" stroke-width="1.1" shape-rendering="geometricPrecision"/></svg>
<svg style="left:763.5px;top:92px" width="16" height="16" viewBox="0 0 16 16" ><path d="M1 8v-3q0-1 1-1v-1q0-2 2-2h1q2 0 2 2v1q1 0 1 1v3z" fill="#a0a0a0" shape-rendering="geometricPrecision"/><path d="M6.5 5.5h8v9h-8z" stroke="#a0a0a0" fill="#f0f0f0" stroke-width="1.2"  shape-rendering="crispEdges"/><path d="M8.5 7.5l4 5M12.5 7.5l-4 5" stroke="#a0a0a0" fill="none" stroke-width="1.2" shape-rendering="geometricPrecision"/></svg>
<svg style="left:786.5px;top:92px" width="16" height="16" viewBox="0 0 16 16" ><path d="M1 8v-3q0-1 1-1v-1q0-2 2-2h1q2 0 2 2v1q1 0 1 1v3z" fill="#a0a0a0" shape-rendering="geometricPrecision"/><path d="M5 8v6M3 12l2 3l2-3" stroke="#a0a0a0" fill="none" stroke-width="1.2" shape-rendering="geometricPrecision"/></svg>
<div class="grip" style="left:3px;top:117px;height:26px"></div>
<div class="grip" style="left:7px;top:117px;height:26px"></div>
<div class="chk" style="left:11.0px;top:119px"></div>
<svg style="left:14.5px;top:122px" width="16" height="16" viewBox="0 0 16 16" ><rect x="0.5" y="2" width="14" height="11.3" fill="#000" shape-rendering="crispEdges"/><rect x="1.8" y="4.7" width="11.4" height="7.300000000000001" fill="#fff" shape-rendering="crispEdges"/><rect x="0.5" y="2" width="14" height="2.7" fill="#000080" shape-rendering="crispEdges"/><rect x="4.6" y="5" width="1" height="7" fill="#808080" shape-rendering="crispEdges"/><rect x="2" y="2.7" width="1.2" height="1" fill="#fff" shape-rendering="crispEdges"/><path d="M7.2 15v-6.800l1.200-1.200h2.800l1.200 1.200h4v6.800z" stroke="#000" fill="#000" stroke-width="0" shape-rendering="geometricPrecision"/><path d="M6.600 14.300v-6.300l1-1h2.600l1 1.300h4.300v6z" stroke="#b0b000" fill="#ffffa0" stroke-width="0.8" shape-rendering="geometricPrecision"/></svg>
<svg style="left:37.5px;top:122px" width="16" height="16" viewBox="0 0 16 16" ><rect x="1.7" y="0" width="13.6" height="11" fill="#000" shape-rendering="crispEdges"/><rect x="3.0" y="2.7" width="11.0" height="7" fill="#fff" shape-rendering="crispEdges"/><rect x="1.7" y="0" width="13.6" height="2.7" fill="#000080" shape-rendering="crispEdges"/><path d="M1.5 14L9 6.500" stroke="#301000" fill="none" stroke-width="2.6" shape-rendering="geometricPrecision"/><path d="M4 5.300l2.500-2l3 .5l4 4l-1.700 2.200l-3.300-2.500l-2.500-.3z" stroke="#202000" fill="#8a8a10" stroke-width="0.9" shape-rendering="geometricPrecision"/></svg>
<svg style="left:60.5px;top:122px" width="16" height="16" viewBox="0 0 16 16" ><rect x="1.6" y="0" width="14" height="12" fill="#000" shape-rendering="crispEdges"/><rect x="2.9000000000000004" y="2.7" width="11.4" height="8" fill="#fff" shape-rendering="crispEdges"/><rect x="1.6" y="0" width="14" height="2.7" fill="#000080" shape-rendering="crispEdges"/><path d="M4.500 4.500h3M9.500 4.500h3" stroke="#a0a0a0" fill="none" stroke-width="1" stroke-dasharray="1.500 1" shape-rendering="crispEdges"/><path d="M4.500 11l4-4.500M10 9.500l3.500-3.500M7 6.500h1.800v1.800M12 6h1.800v1.800" stroke="#303030" fill="none" stroke-width="0.9" shape-rendering="geometricPrecision"/><circle cx="1.8" cy="13" r="1.8" stroke="#000" fill="#80ffff" stroke-width="1.1"/><circle cx="7.2" cy="13" r="1.8" stroke="#000" fill="#80ffff" stroke-width="1.1"/><path d="M3.600 12.800h1.800" stroke="#000" fill="none" stroke-width="1" shape-rendering="geometricPrecision"/></svg>
<svg style="left:83.5px;top:122px" width="16" height="16" viewBox="0 0 16 16" ><rect x="0.6" y="0" width="13.7" height="9.7" fill="#000" shape-rendering="crispEdges"/><rect x="1.9" y="2.7" width="11.1" height="5.699999999999999" fill="#fff" shape-rendering="crispEdges"/><rect x="0.6" y="0" width="13.7" height="2.7" fill="#000080" shape-rendering="crispEdges"/><path d="M4.500 7q-.5-3.500 3-2.500M11 7q.5-3.500-3-2.500" stroke="#000080" fill="none" stroke-width="1.2" stroke-dasharray="2.500 1" shape-rendering="geometricPrecision"/><path d="M.5 9.300h4l1 1v4h-5z" stroke="#000" fill="#fff" stroke-width="1.1"  shape-rendering="crispEdges"/><path d="M10.500 9.300h4l1 1v4h-5z" stroke="#000" fill="#fff" stroke-width="1.1"  shape-rendering="crispEdges"/></svg>
<svg style="left:106.5px;top:122px" width="16" height="16" viewBox="0 0 16 16" ><rect x="1.8" y="0" width="13.6" height="11" fill="#000" shape-rendering="crispEdges"/><rect x="3.1" y="2.7" width="11.0" height="7" fill="#fff" shape-rendering="crispEdges"/><rect x="1.8" y="0" width="13.6" height="2.7" fill="#000080" shape-rendering="crispEdges"/><rect x="5.4" y="2.7" width="1" height="7" fill="#a0a0a0" shape-rendering="crispEdges"/><path d="M1.300 8.800h3.600v5.400h-3.600z" stroke="#000" fill="#fff" stroke-width="1.2"  shape-rendering="crispEdges"/><rect x="0" y="10" width="1" height="1" fill="#000" shape-rendering="crispEdges"/><rect x="0" y="12" width="1" height="1" fill="#000" shape-rendering="crispEdges"/></svg>
<svg style="left:129.5px;top:122px" width="16" height="16" viewBox="0 0 16 16" ><path d="M.5 6.500h10v8h-10z" stroke="#000" fill="#fff" stroke-width="1.2"  shape-rendering="crispEdges"/><path d="M2 9.500h7M2 11.500h2.500M5.500 11.500h3.500M2 13h2.500M5.500 13h3.500" stroke="#000" fill="none" stroke-width="1"  shape-rendering="crispEdges"/><path d="M2.500 6.500l3.500-4.500l4 4.500" stroke="#000" fill="#d0d0d0" stroke-width="1" shape-rendering="geometricPrecision"/><path d="M4 5l2 2l2-2l-2-2zM6 3.500l4-2.500M8.500 5.500l2-1" stroke="#404040" fill="none" stroke-width="0.7" shape-rendering="geometricPrecision"/><path d="M10.200 4l4.500-3v7.500z" stroke="#000080" fill="#000080" stroke-width="0" shape-rendering="geometricPrecision"/><rect x="14.5" y="0.5" width="1.5" height="8.5" fill="#000080" shape-rendering="crispEdges"/></svg>
<div class="sep" style="left:153px;top:119px"></div>
<svg style="left:160.5px;top:122px" width="16" height="16" viewBox="0 0 16 16" ><path d="M.5 8.5h5l1.5 1.5v4.5h-6.5z" stroke="#000" fill="#fff" stroke-width="1"  shape-rendering="crispEdges"/><path d="M8.5 8.5h5l1.5 1.5v4.5h-6.5z" stroke="#000" fill="#fff" stroke-width="1"  shape-rendering="crispEdges"/><path d="M3.5 7.5v-2l7-4M11.5 7.5v-2l-7-4" stroke="#0000c0" fill="none" stroke-width="1.2" stroke-dasharray="2 1" shape-rendering="geometricPrecision"/><path d="M2 2l3-1.5M13 2l-3-1.5" stroke="#000" fill="none" stroke-width="1" shape-rendering="geometricPrecision"/></svg>
<svg style="left:183.5px;top:122px" width="16" height="16" viewBox="0 0 16 16" ><path d="M3.5 1.5h9l2 2v2l-2 1h-9z" stroke="#a0a0a0" fill="#e4e4e4" stroke-width="1.2" stroke-dasharray="1.5 1" shape-rendering="crispEdges"/><path d="M14 5v4h-12" stroke="#a0a0a0" fill="none" stroke-width="1.2"  shape-rendering="crispEdges"/><path d="M1.5 14q0-3 2.5-3" stroke="#a0a0a0" fill="none" stroke-width="1.2" shape-rendering="geometricPrecision"/><path d="M6 14q0-3 2.5-3" stroke="#a0a0a0" fill="none" stroke-width="1.2" shape-rendering="geometricPrecision"/><path d="M10.5 14q0-3 2.5-3" stroke="#a0a0a0" fill="none" stroke-width="1.2" shape-rendering="geometricPrecision"/></svg>
<svg style="left:206.5px;top:122px" width="16" height="16" viewBox="0 0 16 16" ><path d="M1.500 1.500h12.500v8h-2v2h-2v2h-8.500z" stroke="#a0a0a0" fill="#f0f0f0" stroke-width="1.4"  shape-rendering="crispEdges"/><path d="M4 2v11M4.500 4.500h8M7.500 2.500v4M10.500 2.500v4" stroke="#a0a0a0" fill="none" stroke-width="1.1"  shape-rendering="crispEdges"/></svg>
<svg style="left:229.5px;top:122px" width="16" height="16" viewBox="0 0 16 16" ><path d="M.5 1.5h14v12h-14z" stroke="#a0a0a0" fill="#f0f0f0" stroke-width="1.3"  shape-rendering="crispEdges"/><rect x="0" y="1" width="15" height="2.5" fill="#a0a0a0" shape-rendering="crispEdges"/><path d="M3.5 6.5h8v2h-8zM3 11.5h9" stroke="#a0a0a0" fill="none" stroke-width="1.1"  shape-rendering="crispEdges"/></svg>
<svg style="left:252.5px;top:122px" width="16" height="16" viewBox="0 0 16 16" ><rect x="0" y="0" width="15" height="15" fill="#000" shape-rendering="crispEdges"/><rect x="1" y="3" width="13" height="11" fill="#fff" shape-rendering="crispEdges"/><rect x="2" y="1" width="2" height="1" fill="#fff" shape-rendering="crispEdges"/><rect x="11" y="1" width="2" height="1" fill="#fff" shape-rendering="crispEdges"/><path d="M2.500 4.500h2v3h-2zM6 4.500h2v3h-2zM10.500 4.500h1v3.500M9.500 7.500h3" stroke="#0000c0" fill="none" stroke-width="1.1"  shape-rendering="crispEdges"/><path d="M2.500 9.500h2v3h-2zM6 9.500h2v3h-2zM9.500 9.500h2.500v1.500h-2.500v1.500h3" stroke="#0000c0" fill="none" stroke-width="1.1"  shape-rendering="crispEdges"/></svg>
<div class="sep" style="left:276px;top:119px"></div>
<svg style="left:283.5px;top:122px" width="16" height="16" viewBox="0 0 16 16" ><text x="8" y="9.5" font-family="Liberation Serif" font-weight="bold" font-size="12.5" fill="#a0a0a0" text-anchor="middle" textLength="14" lengthAdjust="spacingAndGlyphs">10</text><path d="M1 14.5q-1-1.7 .7-3.5M2.8 11.6q1.4 .2 0 1.6l1.5 1.2M5.2 11q1.7 1.8 -.5 3.6M7 14.5q-1-1.7 .7-3.5M8.8 11.6q1.4 .2 0 1.6l1.5 1.2M11.2 11q1.7 1.8 -.5 3.6M13 14.5q-1-1.7 .7-3.5M14.8 11.6q1.4 .2 0 1.6l1.5 1.2M17.2 11q1.7 1.8 -.5 3.6" stroke="#a0a0a0" fill="none" stroke-width="1.1" shape-rendering="geometricPrecision"/></svg>
<svg style="left:306.5px;top:122px" width="16" height="16" viewBox="0 0 16 16" ><text x="8" y="9.5" font-family="Liberation Serif" font-weight="bold" font-size="12.5" fill="#a0a0a0" text-anchor="middle" textLength="14" lengthAdjust="spacingAndGlyphs">10</text><path d="M1 14.5q-1-1.7 .7-3.5M2.8 11.6q1.4 .2 0 1.6l1.5 1.2M5.2 11q1.7 1.8 -.5 3.6M7 14.5q-1-1.7 .7-3.5M8.8 11.6q1.4 .2 0 1.6l1.5 1.2M11.2 11q1.7 1.8 -.5 3.6M13 14.5q-1-1.7 .7-3.5M14.8 11.6q1.4 .2 0 1.6l1.5 1.2M17.2 11q1.7 1.8 -.5 3.6" stroke="#a0a0a0" fill="none" stroke-width="1.1" shape-rendering="geometricPrecision"/><path d="M1 9.5h10M10 7.5l3 2l-3 2z" stroke="#a0a0a0" fill="#a0a0a0" stroke-width="1.3" shape-rendering="geometricPrecision"/></svg>
<svg style="left:329.5px;top:122px" width="16" height="16" viewBox="0 0 16 16" ><text x="8" y="9.5" font-family="Liberation Serif" font-weight="bold" font-size="12.5" fill="#a0a0a0" text-anchor="middle" textLength="14" lengthAdjust="spacingAndGlyphs">16</text><path d="M1 14.5q-1-1.7 .7-3.5M2.8 11.6q1.4 .2 0 1.6l1.5 1.2M5.2 11q1.7 1.8 -.5 3.6M7 14.5q-1-1.7 .7-3.5M8.8 11.6q1.4 .2 0 1.6l1.5 1.2M11.2 11q1.7 1.8 -.5 3.6M13 14.5q-1-1.7 .7-3.5M14.8 11.6q1.4 .2 0 1.6l1.5 1.2M17.2 11q1.7 1.8 -.5 3.6" stroke="#a0a0a0" fill="none" stroke-width="1.1" shape-rendering="geometricPrecision"/></svg>
<div class="sep" style="left:353px;top:119px"></div>
<svg style="left:360.5px;top:122px" width="16" height="16" viewBox="0 0 16 16" ><path d="M8 0l5 5h-2v2h3v1.5h-3v1.5h3v1.5h-3v2.5h-7v-9h-2z" stroke="#a0a0a0" fill="#a0a0a0" stroke-width="0" shape-rendering="geometricPrecision"/></svg>
<svg style="left:383.5px;top:122px" width="16" height="16" viewBox="0 0 16 16" ><path d="M3 0l6 1l-2 2l3 3h4v1.5h-3v1.5h3v1.5h-3v3.5h-7v-6l-3-2l-2 2z" stroke="#a0a0a0" fill="#a0a0a0" stroke-width="0" shape-rendering="geometricPrecision"/></svg>
<svg style="left:406.5px;top:122px" width="16" height="16" viewBox="0 0 16 16" ><path d="M6 0h7l-1 3h2l-2 4h-2l-1 3h-4l1-3h-2z" stroke="#a0a0a0" fill="#a0a0a0" stroke-width="0" shape-rendering="geometricPrecision"/><path d="M1 2h4M1 4h3M1 6h4M1 8h3" stroke="#a0a0a0" fill="none" stroke-width="1"  shape-rendering="crispEdges"/><path d="M1 14.5q-1-1.7 .7-3.5M2.8 11.6q1.4 .2 0 1.6l1.5 1.2M5.2 11q1.7 1.8 -.5 3.6M7 14.5q-1-1.7 .7-3.5M8.8 11.6q1.4 .2 0 1.6l1.5 1.2M11.2 11q1.7 1.8 -.5 3.6M13 14.5q-1-1.7 .7-3.5M14.8 11.6q1.4 .2 0 1.6l1.5 1.2M17.2 11q1.7 1.8 -.5 3.6" stroke="#a0a0a0" fill="none" stroke-width="1.1" shape-rendering="geometricPrecision"/></svg>
<div class="a" style="left:432px;top:116px;width:1px;height:28px;background:#a0a0a0"></div>
<div class="a" style="left:433px;top:116px;width:1px;height:28px;background:#fff"></div>
<div class="grip" style="left:437px;top:117px;height:26px"></div>
<div class="grip" style="left:441px;top:117px;height:26px"></div>
<svg style="left:448.5px;top:122px" width="16" height="16" viewBox="0 0 16 16" ><rect x="0.7" y="0.7" width="14.6" height="13.6" rx="2.5" fill="#fff" stroke="#000" stroke-width="1.4"/><rect x="2" y="2" width="12" height="5" fill="#40d0f0" shape-rendering="crispEdges"/><rect x="1" y="7" width="14" height="1.5" fill="#000" shape-rendering="crispEdges"/><rect x="4" y="9" width="1" height="3" fill="#000" shape-rendering="crispEdges"/><rect x="3" y="11" width="2" height="1" fill="#000" shape-rendering="crispEdges"/><g shape-rendering="geometricPrecision"><rect x="9" y="5" width="5" height="4.5" fill="#ffe000" stroke="#000" stroke-width=".8"/><path d="M10 5v-1.2a1.5 1.5 0 0 1 3 0v1.200" fill="none" stroke="#ffe000" stroke-width="1.2"/><rect x="11" y="6.5" width="1" height="1.7" fill="#000"/></g></svg>
<svg style="left:471.5px;top:122px" width="16" height="16" viewBox="0 0 16 16" ><g shape-rendering="geometricPrecision"><path d="M4 2h10.500q1.500 0 1 2l-1 7.500h-9z" fill="#000"/><path d="M2 13h12l1.500-3h-9z" fill="#fff" stroke="#000" stroke-width="1"/><rect x="6.500" y="5" width="6" height="4.500" fill="#e8e8e8"/><rect x="8" y="6" width="3.500" height="2.500" fill="#0000c0"/><rect x="1" y="1.500" width="5" height="4.500" fill="#ffe000" stroke="#000" stroke-width=".8"/><path d="M2 1.500v-.5a1.500 1.500 0 0 1 3 0v.5" fill="none" stroke="#ffe000" stroke-width="1.100"/><rect x="3" y="3" width="1" height="1.700" fill="#000"/><path d="M2.500 7.500q0 3 2 5" stroke="#000" fill="none" stroke-width="1.300"/></g></svg>
<div class="sep" style="left:495px;top:119px"></div>
<svg style="left:502.5px;top:122px" width="16" height="16" viewBox="0 0 16 16" ><path d="M1 2h9M1 5h9M1 8h7" stroke="#a0a0a0" fill="none" stroke-width="1.9"  shape-rendering="crispEdges"/><path d="M10.5 3.500h4.500v9h-4.500z" stroke="#a0a0a0" fill="#e0e0e0" stroke-width="1.2"  shape-rendering="crispEdges"/><path d="M3 11.500h8" stroke="#a0a0a0" fill="none" stroke-width="1.6"  shape-rendering="crispEdges"/><circle cx="11.5" cy="12" r="2.2" stroke="#a0a0a0" fill="#f0f0f0" stroke-width="1"/><path d="M10.500 11l2 2M12.500 11l-2 2" stroke="#a0a0a0" fill="none" stroke-width="0.8" shape-rendering="geometricPrecision"/></svg>
<div class="sep" style="left:526px;top:119px"></div>
<svg style="left:533.5px;top:122px" width="16" height="16" viewBox="0 0 16 16" ><path d="M4.500 14q-3-3.500-3-5.500q.8-.8 2 .5v-5.500q.9-1 1.700 0v-2q.9-1 1.700 0v-.3q.9-1 1.700 0v1.300q.9-.9 1.700 0v6q0 3-1.500 5.500" fill="#f4f4f4" stroke="#a0a0a0" stroke-width="1.500" shape-rendering="geometricPrecision"/><path d="M4.200 8v-3.500M6 7.500v-5.500M7.800 7.500v-5.500" stroke="#a0a0a0" fill="none" stroke-width="1" shape-rendering="geometricPrecision"/><rect x="9" y="10" width="2" height="4" fill="#a0a0a0" shape-rendering="crispEdges"/><path d="M12 9.500v5l3-2.500z" stroke="#a0a0a0" fill="#a0a0a0" stroke-width="0" shape-rendering="geometricPrecision"/></svg>
<svg style="left:556.5px;top:122px" width="16" height="16" viewBox="0 0 16 16" ><path d="M4.500 14q-3-3.500-3-5.500q.8-.8 2 .5v-5.500q.9-1 1.700 0v-2q.9-1 1.700 0v-.3q.9-1 1.700 0v1.300q.9-.9 1.700 0v6q0 3-1.500 5.500" fill="#f4f4f4" stroke="#a0a0a0" stroke-width="1.500" shape-rendering="geometricPrecision"/><path d="M4 5l2 3l-2 3M7 4l2 3.500l-2 3.500M5 12l3-2" stroke="#a0a0a0" fill="none" stroke-width="1.5" shape-rendering="geometricPrecision"/><rect x="9" y="10" width="2" height="4" fill="#a0a0a0" shape-rendering="crispEdges"/><path d="M12 9.500v5l3-2.500z" stroke="#a0a0a0" fill="#a0a0a0" stroke-width="0" shape-rendering="geometricPrecision"/></svg>
<svg style="left:579.5px;top:122px" width="16" height="16" viewBox="0 0 16 16" ><path d="M3 1.500v12l11-6z" stroke="#a0a0a0" fill="#a0a0a0" stroke-width="0" shape-rendering="geometricPrecision"/></svg>
<svg style="left:602.5px;top:122px" width="16" height="16" viewBox="0 0 16 16" ><rect x="3" y="2" width="10" height="11" fill="#a0a0a0" shape-rendering="crispEdges"/></svg>
<svg style="left:625.5px;top:122px" width="16" height="16" viewBox="0 0 16 16" ><rect x="3" y="2" width="4" height="11" fill="#a0a0a0" shape-rendering="crispEdges"/><rect x="9" y="2" width="4" height="11" fill="#a0a0a0" shape-rendering="crispEdges"/></svg>
<svg style="left:648.5px;top:122px" width="16" height="16" viewBox="0 0 16 16" ><path d="M2 2v11l9-5.500z" stroke="#a0a0a0" fill="#a0a0a0" stroke-width="0" shape-rendering="geometricPrecision"/><rect x="11" y="2" width="3" height="11" fill="#a0a0a0" shape-rendering="crispEdges"/></svg>
<svg style="left:671.5px;top:122px" width="16" height="16" viewBox="0 0 16 16" ><rect x="3" y="1" width="2" height="6" fill="#a0a0a0" shape-rendering="crispEdges"/><rect x="6" y="1" width="2" height="4" fill="#a0a0a0" shape-rendering="crispEdges"/><path d="M10.500 1v8M8 6.500h5l-2.500 3.500z" stroke="#a0a0a0" fill="#a0a0a0" stroke-width="1.4" shape-rendering="geometricPrecision"/><rect x="2" y="7" width="5" height="2" fill="#a0a0a0" shape-rendering="crispEdges"/><rect x="5" y="9" width="9" height="4" fill="#a0a0a0" shape-rendering="crispEdges"/><rect x="8" y="13" width="2" height="1.5" fill="#a0a0a0" shape-rendering="crispEdges"/></svg>
<svg style="left:694.5px;top:122px" width="16" height="16" viewBox="0 0 16 16" ><rect x="11" y="1" width="2" height="6" fill="#a0a0a0" shape-rendering="crispEdges"/><rect x="8" y="1" width="2" height="4" fill="#a0a0a0" shape-rendering="crispEdges"/><path d="M5.500 9v-8M3 4h5l-2.500-3.500z" stroke="#a0a0a0" fill="#a0a0a0" stroke-width="1.4" shape-rendering="geometricPrecision"/><rect x="9" y="7" width="5" height="2" fill="#a0a0a0" shape-rendering="crispEdges"/><rect x="2" y="9" width="9" height="4" fill="#a0a0a0" shape-rendering="crispEdges"/><rect x="6" y="13" width="2" height="1.5" fill="#a0a0a0" shape-rendering="crispEdges"/></svg>
<svg style="left:717.5px;top:122px" width="16" height="16" viewBox="0 0 16 16" ><path d="M1 2v11l7-5.500zM8 2v11l7-5.500z" stroke="#a0a0a0" fill="#a0a0a0" stroke-width="0" shape-rendering="geometricPrecision"/></svg>
<svg style="left:740.5px;top:122px" width="16" height="16" viewBox="0 0 16 16" ><path d="M1 2.500l9 5l-9 5" stroke="#a0a0a0" fill="none" stroke-width="2.6" shape-rendering="geometricPrecision"/><rect x="11" y="2" width="3" height="11" fill="#a0a0a0" shape-rendering="crispEdges"/></svg>
<div class="a" style="left:766px;top:116px;width:1px;height:28px;background:#a0a0a0"></div>
<div class="a" style="left:767px;top:116px;width:1px;height:28px;background:#fff"></div>
<div class="grip" style="left:771px;top:117px;height:26px"></div>
<div class="grip" style="left:775px;top:117px;height:26px"></div>
<svg style="left:782.5px;top:122px" width="16" height="16" viewBox="0 0 16 16" ><rect x="1.5" y="4" width="14.5" height="8" fill="#a0a0a0" shape-rendering="crispEdges"/><rect x="3" y="5" width="1" height="1" fill="#d8d8d8" shape-rendering="crispEdges"/><rect x="3" y="7" width="1" height="1" fill="#d8d8d8" shape-rendering="crispEdges"/><rect x="3" y="9" width="1" height="1" fill="#d8d8d8" shape-rendering="crispEdges"/><rect x="5" y="5" width="1" height="1" fill="#d8d8d8" shape-rendering="crispEdges"/><rect x="5" y="7" width="1" height="1" fill="#d8d8d8" shape-rendering="crispEdges"/><rect x="5" y="9" width="1" height="1" fill="#d8d8d8" shape-rendering="crispEdges"/><rect x="7" y="5" width="1" height="1" fill="#d8d8d8" shape-rendering="crispEdges"/><rect x="7" y="7" width="1" height="1" fill="#d8d8d8" shape-rendering="crispEdges"/><rect x="7" y="9" width="1" height="1" fill="#d8d8d8" shape-rendering="crispEdges"/><rect x="9" y="5" width="1" height="1" fill="#d8d8d8" shape-rendering="crispEdges"/><rect x="9" y="7" width="1" height="1" fill="#d8d8d8" shape-rendering="crispEdges"/><rect x="9" y="9" width="1" height="1" fill="#d8d8d8" shape-rendering="crispEdges"/><rect x="11" y="5" width="1" height="1" fill="#d8d8d8" shape-rendering="crispEdges"/><rect x="11" y="7" width="1" height="1" fill="#d8d8d8" shape-rendering="crispEdges"/><rect x="11" y="9" width="1" height="1" fill="#d8d8d8" shape-rendering="crispEdges"/><rect x="13" y="5" width="1" height="1" fill="#d8d8d8" shape-rendering="crispEdges"/><rect x="13" y="7" width="1" height="1" fill="#d8d8d8" shape-rendering="crispEdges"/><rect x="13" y="9" width="1" height="1" fill="#d8d8d8" shape-rendering="crispEdges"/></svg>
<div class="grip" style="left:3px;top:147px;height:26px"></div>
<div class="grip" style="left:7px;top:147px;height:26px"></div>
<svg style="left:14.5px;top:152px" width="16" height="16" viewBox="0 0 16 16" ><path d="M7 1.5h2" stroke="#a0a0a0" fill="none" stroke-width="1" stroke-dasharray="2 .6" shape-rendering="crispEdges"/><path d="M7 3.5h8" stroke="#a0a0a0" fill="none" stroke-width="1" stroke-dasharray="2 .6" shape-rendering="crispEdges"/><path d="M7 5.5h8" stroke="#a0a0a0" fill="none" stroke-width="1" stroke-dasharray="2 .6" shape-rendering="crispEdges"/><path d="M7 7.5h8" stroke="#a0a0a0" fill="none" stroke-width="1" stroke-dasharray="2 .6" shape-rendering="crispEdges"/><path d="M7 9.5h8" stroke="#a0a0a0" fill="none" stroke-width="1" stroke-dasharray="2 .6" shape-rendering="crispEdges"/><path d="M7 11.5h8" stroke="#a0a0a0" fill="none" stroke-width="1" stroke-dasharray="2 .6" shape-rendering="crispEdges"/><path d="M7 13.5h2" stroke="#a0a0a0" fill="none" stroke-width="1" stroke-dasharray="2 .6" shape-rendering="crispEdges"/><rect x="7" y="1" width="1" height="14" fill="#a0a0a0" shape-rendering="crispEdges"/><path d="M6 7.500h-5M4 5l-3 2.500l3 2.500" stroke="#a0a0a0" fill="none" stroke-width="1.3" shape-rendering="geometricPrecision"/></svg>
<svg style="left:37.5px;top:152px" width="16" height="16" viewBox="0 0 16 16" ><path d="M7 1.5h2" stroke="#a0a0a0" fill="none" stroke-width="1" stroke-dasharray="2 .6" shape-rendering="crispEdges"/><path d="M7 3.5h8" stroke="#a0a0a0" fill="none" stroke-width="1" stroke-dasharray="2 .6" shape-rendering="crispEdges"/><path d="M7 5.5h8" stroke="#a0a0a0" fill="none" stroke-width="1" stroke-dasharray="2 .6" shape-rendering="crispEdges"/><path d="M7 7.5h8" stroke="#a0a0a0" fill="none" stroke-width="1" stroke-dasharray="2 .6" shape-rendering="crispEdges"/><path d="M7 9.5h8" stroke="#a0a0a0" fill="none" stroke-width="1" stroke-dasharray="2 .6" shape-rendering="crispEdges"/><path d="M7 11.5h8" stroke="#a0a0a0" fill="none" stroke-width="1" stroke-dasharray="2 .6" shape-rendering="crispEdges"/><path d="M7 13.5h2" stroke="#a0a0a0" fill="none" stroke-width="1" stroke-dasharray="2 .6" shape-rendering="crispEdges"/><rect x="7" y="1" width="1" height="14" fill="#a0a0a0" shape-rendering="crispEdges"/><path d="M0 7.500h5M3 5l3 2.500l-3 2.500" stroke="#a0a0a0" fill="none" stroke-width="1.3" shape-rendering="geometricPrecision"/></svg>
<div class="sep" style="left:61px;top:149px"></div>
<svg style="left:68.5px;top:152px" width="16" height="16" viewBox="0 0 16 16" ><path d="M2 1.5h9" stroke="#a0a0a0" fill="none" stroke-width="1"  shape-rendering="crispEdges"/><path d="M2 4.5h0" stroke="#a0a0a0" fill="none" stroke-width="1"  shape-rendering="crispEdges"/><path d="M2 7.5h0" stroke="#a0a0a0" fill="none" stroke-width="1"  shape-rendering="crispEdges"/><path d="M2 10.5h0" stroke="#a0a0a0" fill="none" stroke-width="1"  shape-rendering="crispEdges"/><path d="M2 13.5h0" stroke="#a0a0a0" fill="none" stroke-width="1"  shape-rendering="crispEdges"/><path d="M4 4.5h9" stroke="#a0a0a0" fill="none" stroke-width="1"  shape-rendering="crispEdges"/><path d="M4 7.5h9" stroke="#a0a0a0" fill="none" stroke-width="1"  shape-rendering="crispEdges"/><path d="M4 10.5h9" stroke="#a0a0a0" fill="none" stroke-width="1"  shape-rendering="crispEdges"/><path d="M4 13.5h9" stroke="#a0a0a0" fill="none" stroke-width="1"  shape-rendering="crispEdges"/></svg>
<svg style="left:91.5px;top:152px" width="16" height="16" viewBox="0 0 16 16" ><path d="M5 7.5h9" stroke="#a0a0a0" fill="none" stroke-width="1"  shape-rendering="crispEdges"/><path d="M5 10.5h9" stroke="#a0a0a0" fill="none" stroke-width="1"  shape-rendering="crispEdges"/><path d="M5 13.5h9" stroke="#a0a0a0" fill="none" stroke-width="1"  shape-rendering="crispEdges"/><path d="M3 3.500h4M7 1.500q5 0 5 2t-5 2" stroke="#a0a0a0" fill="none" stroke-width="1.2" shape-rendering="geometricPrecision"/><path d="M3 3.500l3-2.500v5z" stroke="#a0a0a0" fill="#a0a0a0" stroke-width="0" shape-rendering="geometricPrecision"/></svg>
<div class="sep" style="left:115px;top:149px"></div>
<svg style="left:122.5px;top:152px" width="16" height="16" viewBox="0 0 16 16" ><path d="M1.500 13.500L12 2" stroke="#a0a0a0" fill="none" stroke-width="1.5" shape-rendering="geometricPrecision"/><path d="M7 7l4-3.500l4 4l-.5 3.500l-3.500 1.500l-3.500-2.500z" stroke="#a0a0a0" fill="#a0a0a0" stroke-width="0" shape-rendering="geometricPrecision"/></svg>
<svg style="left:145.5px;top:152px" width="16" height="16" viewBox="0 0 16 16" ><path d="M1.500 14.500L12 3" stroke="#a0a0a0" fill="none" stroke-width="1.5" shape-rendering="geometricPrecision"/><path d="M8 8.500l3.500-3l4 4l-.5 3.500l-3.500 1.500l-3.500-2.500z" stroke="#a0a0a0" fill="#a0a0a0" stroke-width="0" shape-rendering="geometricPrecision"/><path d="M2 4q1-3.500 6-1.500M1.500 1v3.500h3.500" stroke="#a0a0a0" fill="none" stroke-width="1.3" shape-rendering="geometricPrecision"/></svg>
<svg style="left:168.5px;top:152px" width="16" height="16" viewBox="0 0 16 16" ><path d="M1.500 14.500L12 3" stroke="#a0a0a0" fill="none" stroke-width="1.5" shape-rendering="geometricPrecision"/><path d="M8 8.500l3.500-3l4 4l-.5 3.500l-3.500 1.500l-3.500-2.500z" stroke="#a0a0a0" fill="#a0a0a0" stroke-width="0" shape-rendering="geometricPrecision"/><path d="M2 3q3-3 6 0M8.500 0v3.500h-3.500" stroke="#a0a0a0" fill="none" stroke-width="1.3" shape-rendering="geometricPrecision"/></svg>
<svg style="left:191.5px;top:152px" width="16" height="16" viewBox="0 0 16 16" ><path d="M1.500 14.500L12 3" stroke="#a0a0a0" fill="none" stroke-width="1.5" shape-rendering="geometricPrecision"/><path d="M8 8.500l3.500-3l4 4l-.5 3.500l-3.500 1.500l-3.500-2.500z" stroke="#a0a0a0" fill="#a0a0a0" stroke-width="0" shape-rendering="geometricPrecision"/><path d="M1 1l8 8M9 1l-8 8" stroke="#a0a0a0" fill="none" stroke-width="1.4" shape-rendering="geometricPrecision"/></svg>
<div class="a" style="left:217px;top:146px;width:1px;height:28px;background:#a0a0a0"></div>
<div class="a" style="left:218px;top:146px;width:1px;height:28px;background:#fff"></div>
<div class="a" style="left:0px;top:176px;width:307px;height:480px;background:#f0f0f0"></div>
<div class="a" style="left:5px;top:180px;width:264px;height:2px;background:#fff"></div>
<div class="a" style="left:5px;top:182px;width:264px;height:1px;background:#a0a0a0"></div>
<div class="a" style="left:5px;top:184px;width:264px;height:2px;background:#fff"></div>
<div class="a" style="left:5px;top:186px;width:264px;height:1px;background:#a0a0a0"></div>
<div class="a" style="left:270px;top:177px;width:12px;height:12px;background:#f0f0f0;border:1px solid;border-color:#fff #808080 #808080 #fff;border-width:1px 1.5px 1.5px 1px"></div>
<svg style="left:273px;top:181px" width="6" height="4" viewBox="0 0 6 4"><path d="M0.3 0.3h5.4l-2.7 3.2z" fill="#a8a8a8"/></svg>
<div class="a" style="left:284px;top:177px;width:11px;height:12px;background:#f0f0f0;border:1px solid;border-color:#fff #808080 #808080 #fff;border-width:1px 1.5px 1.5px 1px"></div>
<svg style="left:285.5px;top:180.5px" width="7" height="6" viewBox="0 0 7 6"><path d="M1 0.6l5 4.8M6 0.6l-5 4.8" stroke="#000" stroke-width="1.7" fill="none"/></svg>
<div class="a" style="left:3px;top:191px;width:293px;height:470px;background:#fff;border-left:1px solid #a0a0a0;border-top:1px solid #a0a0a0"></div>
<div class="a" style="left:4px;top:192px;width:291px;height:1px;background:#696969"></div>
<div class="a" style="left:4px;top:192px;width:1px;height:470px;background:#696969"></div>
<div class="a" style="left:295px;top:191px;width:1px;height:470px;background:#e3e3e3"></div>
<div class="a" style="left:296px;top:191px;width:1px;height:470px;background:#fff"></div>
<div class="a" style="left:303px;top:176px;width:3px;height:480px;background:#fff"></div>
<div class="a" style="left:62px;top:210px;width:167px;height:18px;background:#e6e6e6"></div>
<div class="a" style="left:18px;top:203px;width:6px;height:1px;background-image:repeating-linear-gradient(90deg,#808080 0 1px,transparent 1px 2px)"></div>
<div class="a" style="left:9px;top:199px;width:9px;height:9px;background:#fff;border:1px solid #808080"></div>
<div class="a" style="left:11px;top:203px;width:5px;height:1px;background:#000"></div>
<div class="a" style="left:32px;top:209px;width:1px;height:8px;background-image:repeating-linear-gradient(180deg,#808080 0 1px,transparent 1px 2px)"></div>
<div class="a" style="left:37px;top:221px;width:7px;height:1px;background-image:repeating-linear-gradient(90deg,#808080 0 1px,transparent 1px 2px)"></div>
<div class="a" style="left:28px;top:217px;width:9px;height:9px;background:#fff;border:1px solid #808080"></div>
<div class="a" style="left:30px;top:221px;width:5px;height:1px;background:#000"></div>
<div class="a" style="left:51px;top:227px;width:1px;height:194px;background-image:repeating-linear-gradient(180deg,#808080 0 1px,transparent 1px 2px)"></div>
<div class="a" style="left:52px;top:239px;width:10px;height:1px;background-image:repeating-linear-gradient(90deg,#808080 0 1px,transparent 1px 2px)"></div>
<div class="a" style="left:52px;top:257px;width:10px;height:1px;background-image:repeating-linear-gradient(90deg,#808080 0 1px,transparent 1px 2px)"></div>
<div class="a" style="left:52px;top:275px;width:10px;height:1px;background-image:repeating-linear-gradient(90deg,#808080 0 1px,transparent 1px 2px)"></div>
<div class="a" style="left:52px;top:293px;width:10px;height:1px;background-image:repeating-linear-gradient(90deg,#808080 0 1px,transparent 1px 2px)"></div>
<div class="a" style="left:52px;top:311px;width:10px;height:1px;background-image:repeating-linear-gradient(90deg,#808080 0 1px,transparent 1px 2px)"></div>
<div class="a" style="left:52px;top:419px;width:10px;height:1px;background-image:repeating-linear-gradient(90deg,#808080 0 1px,transparent 1px 2px)"></div>
<div class="a" style="left:56px;top:329px;width:6px;height:1px;background-image:repeating-linear-gradient(90deg,#808080 0 1px,transparent 1px 2px)"></div>
<div class="a" style="left:47px;top:325px;width:9px;height:9px;background:#fff;border:1px solid #808080"></div>
<div class="a" style="left:49px;top:329px;width:5px;height:1px;background:#000"></div>
<div class="a" style="left:70px;top:335px;width:1px;height:8px;background-image:repeating-linear-gradient(180deg,#808080 0 1px,transparent 1px 2px)"></div>
<div class="a" style="left:75px;top:347px;width:7px;height:1px;background-image:repeating-linear-gradient(90deg,#808080 0 1px,transparent 1px 2px)"></div>
<div class="a" style="left:66px;top:343px;width:9px;height:9px;background:#fff;border:1px solid #808080"></div>
<div class="a" style="left:68px;top:347px;width:5px;height:1px;background:#000"></div>
<div class="a" style="left:89px;top:353px;width:1px;height:49px;background-image:repeating-linear-gradient(180deg,#808080 0 1px,transparent 1px 2px)"></div>
<div class="a" style="left:90px;top:365px;width:11px;height:1px;background-image:repeating-linear-gradient(90deg,#808080 0 1px,transparent 1px 2px)"></div>
<div class="a" style="left:90px;top:383px;width:11px;height:1px;background-image:repeating-linear-gradient(90deg,#808080 0 1px,transparent 1px 2px)"></div>
<div class="a" style="left:90px;top:401px;width:11px;height:1px;background-image:repeating-linear-gradient(90deg,#808080 0 1px,transparent 1px 2px)"></div>
<svg style="left:24px;top:194px" width="16" height="16" viewBox="0 0 16 16" shape-rendering="crispEdges"><g transform="translate(0 .7)"><path d="M5.5 0.5h5v3h-5z" stroke="#000" fill="#fff" stroke-width="1"  shape-rendering="crispEdges"/><path d="M1.5 6.5h3v2h-3z" stroke="#000" fill="#fff" stroke-width="1"  shape-rendering="crispEdges"/><path d="M6.5 6.5h3v2h-3z" stroke="#000" fill="#fff" stroke-width="1"  shape-rendering="crispEdges"/><path d="M11.5 6.5h3v2h-3z" stroke="#000" fill="#fff" stroke-width="1"  shape-rendering="crispEdges"/><path d="M3.5 11.5h3v2h-3z" stroke="#000" fill="#fff" stroke-width="1"  shape-rendering="crispEdges"/><path d="M9.5 11.5h3v2h-3z" stroke="#000" fill="#fff" stroke-width="1"  shape-rendering="crispEdges"/><path d="M8 4v2M3 6v-1h10v1M8 9v1M5 11v-1h6v1M3 9v1M13 9v1" stroke="#000" fill="none" stroke-width="1"  shape-rendering="crispEdges"/></g></svg>
<svg style="left:44px;top:212px" width="16" height="16" viewBox="0 0 16 16" shape-rendering="crispEdges"><rect x="0" y="1" width="15" height="14" fill="#000" shape-rendering="crispEdges"/><path d="M0 1l1-1h14l1 1" stroke="#000" fill="#000" stroke-width="1"  shape-rendering="crispEdges"/><rect x="2" y="3" width="1" height="4" fill="#fff" shape-rendering="crispEdges"/><rect x="2" y="3" width="3" height="1" fill="#fff" shape-rendering="crispEdges"/><rect x="2" y="6" width="3" height="1" fill="#fff" shape-rendering="crispEdges"/><rect x="6" y="3" width="8" height="1" fill="#c0c0c0" shape-rendering="crispEdges"/><rect x="6" y="5" width="3" height="2" fill="#c0c0c0" shape-rendering="crispEdges"/><rect x="10" y="5" width="3" height="2" fill="#e02020" shape-rendering="crispEdges"/><rect x="2" y="9" width="1" height="5" fill="#c0c0c0" shape-rendering="crispEdges"/><rect x="4" y="10" width="1" height="4" fill="#808080" shape-rendering="crispEdges"/><rect x="6" y="9" width="7" height="1" fill="#808080" shape-rendering="crispEdges"/><path d="M10 11v3l2.500-1.500z" stroke="#c0c0c0" fill="#c0c0c0" stroke-width="0" shape-rendering="geometricPrecision"/><path d="M13 15l2-2v-11" stroke="#808080" fill="none" stroke-width="1" shape-rendering="geometricPrecision"/></svg>
<svg style="left:62px;top:230px" width="16" height="16" viewBox="0 0 16 16" shape-rendering="crispEdges"><rect x="0" y="1" width="5" height="5" fill="#0000e0" shape-rendering="crispEdges"/><rect x="11" y="2" width="5" height="5" fill="#e00000" shape-rendering="crispEdges"/><path d="M10.500 9.500h4v4h-4z" stroke="#808000" fill="#ffff00" stroke-width="1"  shape-rendering="crispEdges"/><path d="M5 4.500h3v7h2.500M8 5h3" stroke="#808080" fill="none" stroke-width="1"  shape-rendering="crispEdges"/></svg>
<svg style="left:62px;top:248px" width="16" height="16" viewBox="0 0 16 16" shape-rendering="crispEdges"><path d="M2.500 1.500h9l2 1.500v3l-2 1.500h-9z" stroke="#808000" fill="#ffff80" stroke-width="1"  shape-rendering="crispEdges"/><circle cx="11" cy="4.5" r="0.8" stroke="#000" fill="#fff" stroke-width="0.7"/><path d="M13.500 4.500q2 0 1.500 2.500v2.500h-13" stroke="#000" fill="none" stroke-width="1" shape-rendering="geometricPrecision"/><path d="M1.5 14.500q-.5-3 3-3" stroke="#000" fill="none" stroke-width="1.3" shape-rendering="geometricPrecision"/><path d="M6 14.500q-.5-3 3-3" stroke="#000" fill="none" stroke-width="1.3" shape-rendering="geometricPrecision"/><path d="M10.5 14.500q-.5-3 3-3" stroke="#000" fill="none" stroke-width="1.3" shape-rendering="geometricPrecision"/></svg>
<svg style="left:62px;top:266px" width="16" height="16" viewBox="0 0 16 16" shape-rendering="crispEdges"><rect x="0" y="1" width="15" height="14" fill="#20e0e0" shape-rendering="crispEdges"/><rect x="2" y="2" width="5" height="11" rx="1.500" fill="#000"/><rect x="3" y="4" width="2" height="6" fill="#808080" shape-rendering="crispEdges"/><rect x="3" y="13" width="3" height="2" fill="#000" shape-rendering="crispEdges"/><rect x="9" y="2" width="5" height="5" rx="1" fill="#000"/><rect x="11" y="7" width="2" height="6" fill="#808000" shape-rendering="crispEdges"/><rect x="10" y="2" width="1" height="3" fill="#808080" shape-rendering="crispEdges"/><rect x="11" y="13" width="1" height="2" fill="#000" shape-rendering="crispEdges"/></svg>
<svg style="left:62px;top:284px" width="16" height="16" viewBox="0 0 16 16" shape-rendering="crispEdges"><rect x="2.500" y="1.500" width="11" height="13" rx="1.500" fill="#fff" stroke="#000" stroke-width="1"/><rect x="4" y="1" width="1" height="2" fill="#000" shape-rendering="crispEdges"/><rect x="6" y="1" width="1" height="2" fill="#000" shape-rendering="crispEdges"/><rect x="8" y="1" width="1" height="2" fill="#000" shape-rendering="crispEdges"/><rect x="10" y="1" width="1" height="2" fill="#000" shape-rendering="crispEdges"/><rect x="12" y="1" width="1" height="2" fill="#000" shape-rendering="crispEdges"/><path d="M4 5.500h5M4 7.500h3" stroke="#808080" fill="none" stroke-width="1" stroke-dasharray="1 1" shape-rendering="crispEdges"/><circle cx="9.5" cy="10.5" r="2" stroke="#000" fill="#ffe000" stroke-width="1"/><circle cx="9.5" cy="10.5" r="0.6" stroke="#000" fill="#000" stroke-width="0.5"/></svg>
<svg style="left:62px;top:302px" width="16" height="16" viewBox="0 0 16 16" shape-rendering="crispEdges"><path d="M.500 9.500l9-7h5.500v1.500l-9 7h-5.500z" stroke="#606060" fill="#a8a8a8" stroke-width="1" shape-rendering="geometricPrecision"/><path d="M.500 9.500h5.500l9-7M6 9.500v1.500" stroke="#606060" fill="none" stroke-width="0.8" shape-rendering="geometricPrecision"/><rect x="1" y="11" width="1" height="3" fill="#404040" shape-rendering="crispEdges"/><rect x="3" y="11" width="1" height="3" fill="#404040" shape-rendering="crispEdges"/><rect x="5" y="11" width="1" height="3" fill="#404040" shape-rendering="crispEdges"/><path d="M7.5 10v2.500" stroke="#404040" fill="none" stroke-width="1"  shape-rendering="crispEdges"/><path d="M9.5 8.5v2.500" stroke="#404040" fill="none" stroke-width="1"  shape-rendering="crispEdges"/><path d="M11.5 7v2.500" stroke="#404040" fill="none" stroke-width="1"  shape-rendering="crispEdges"/><path d="M13.5 5.5v2.500" stroke="#404040" fill="none" stroke-width="1"  shape-rendering="crispEdges"/></svg>
<svg style="left:62px;top:320px" width="16" height="16" viewBox="0 0 16 16" shape-rendering="crispEdges"><path d="M0 1.500l10.500-.5l6 14.500l-11 1z" stroke="#b8a800" fill="#ffe800" stroke-width="0.6" shape-rendering="geometricPrecision"/><rect x="1" y="1" width="1" height="1" fill="#000" shape-rendering="crispEdges"/><rect x="2" y="1" width="1" height="1" fill="#8a7800" shape-rendering="crispEdges"/><rect x="4" y="1" width="1" height="1" fill="#000" shape-rendering="crispEdges"/><rect x="6" y="1" width="1" height="1" fill="#000" shape-rendering="crispEdges"/><rect x="7" y="1" width="1" height="1" fill="#8a7800" shape-rendering="crispEdges"/><rect x="9" y="1" width="1" height="1" fill="#8a7800" shape-rendering="crispEdges"/><rect x="10" y="1" width="1" height="1" fill="#000" shape-rendering="crispEdges"/><rect x="2" y="2" width="1" height="1" fill="#8a7800" shape-rendering="crispEdges"/><rect x="3" y="2" width="1" height="1" fill="#000" shape-rendering="crispEdges"/><rect x="4" y="2" width="1" height="1" fill="#8a7800" shape-rendering="crispEdges"/><rect x="6" y="2" width="1" height="1" fill="#8a7800" shape-rendering="crispEdges"/><rect x="7" y="2" width="1" height="1" fill="#8a7800" shape-rendering="crispEdges"/><rect x="11" y="2" width="1" height="1" fill="#8a7800" shape-rendering="crispEdges"/><rect x="3" y="3" width="1" height="1" fill="#000" shape-rendering="crispEdges"/><rect x="5" y="3" width="1" height="1" fill="#000" shape-rendering="crispEdges"/><rect x="6" y="3" width="1" height="1" fill="#000" shape-rendering="crispEdges"/><rect x="7" y="3" width="1" height="1" fill="#8a7800" shape-rendering="crispEdges"/><rect x="8" y="3" width="1" height="1" fill="#8a7800" shape-rendering="crispEdges"/><rect x="10" y="3" width="1" height="1" fill="#8a7800" shape-rendering="crispEdges"/><rect x="3" y="4" width="1" height="1" fill="#000" shape-rendering="crispEdges"/><rect x="5" y="4" width="1" height="1" fill="#000" shape-rendering="crispEdges"/><rect x="6" y="4" width="1" height="1" fill="#8a7800" shape-rendering="crispEdges"/><rect x="7" y="4" width="1" height="1" fill="#8a7800" shape-rendering="crispEdges"/><rect x="9" y="4" width="1" height="1" fill="#8a7800" shape-rendering="crispEdges"/><rect x="10" y="4" width="1" height="1" fill="#8a7800" shape-rendering="crispEdges"/><rect x="3" y="5" width="1" height="1" fill="#8a7800" shape-rendering="crispEdges"/><rect x="4" y="5" width="1" height="1" fill="#8a7800" shape-rendering="crispEdges"/><rect x="7" y="5" width="1" height="1" fill="#000" shape-rendering="crispEdges"/><rect x="12" y="5" width="1" height="1" fill="#8a7800" shape-rendering="crispEdges"/><rect x="4" y="6" width="1" height="1" fill="#000" shape-rendering="crispEdges"/><rect x="5" y="6" width="1" height="1" fill="#000" shape-rendering="crispEdges"/><rect x="7" y="6" width="1" height="1" fill="#000" shape-rendering="crispEdges"/><rect x="8" y="6" width="1" height="1" fill="#000" shape-rendering="crispEdges"/><rect x="9" y="6" width="1" height="1" fill="#000" shape-rendering="crispEdges"/><rect x="5" y="7" width="1" height="1" fill="#8a7800" shape-rendering="crispEdges"/><rect x="9" y="7" width="1" height="1" fill="#8a7800" shape-rendering="crispEdges"/><rect x="12" y="7" width="1" height="1" fill="#000" shape-rendering="crispEdges"/><rect x="4" y="8" width="1" height="1" fill="#8a7800" shape-rendering="crispEdges"/><rect x="9" y="8" width="1" height="1" fill="#8a7800" shape-rendering="crispEdges"/><rect x="10" y="8" width="1" height="1" fill="#8a7800" shape-rendering="crispEdges"/><rect x="12" y="8" width="1" height="1" fill="#000" shape-rendering="crispEdges"/><rect x="13" y="8" width="1" height="1" fill="#000" shape-rendering="crispEdges"/><rect x="4" y="9" width="1" height="1" fill="#000" shape-rendering="crispEdges"/><rect x="5" y="9" width="1" height="1" fill="#000" shape-rendering="crispEdges"/><rect x="6" y="9" width="1" height="1" fill="#000" shape-rendering="crispEdges"/><rect x="8" y="9" width="1" height="1" fill="#8a7800" shape-rendering="crispEdges"/><rect x="9" y="9" width="1" height="1" fill="#8a7800" shape-rendering="crispEdges"/><rect x="10" y="9" width="1" height="1" fill="#8a7800" shape-rendering="crispEdges"/><rect x="12" y="9" width="1" height="1" fill="#8a7800" shape-rendering="crispEdges"/><rect x="13" y="9" width="1" height="1" fill="#8a7800" shape-rendering="crispEdges"/><rect x="9" y="10" width="1" height="1" fill="#8a7800" shape-rendering="crispEdges"/><rect x="10" y="10" width="1" height="1" fill="#000" shape-rendering="crispEdges"/><rect x="11" y="10" width="1" height="1" fill="#8a7800" shape-rendering="crispEdges"/><rect x="14" y="10" width="1" height="1" fill="#8a7800" shape-rendering="crispEdges"/><rect x="5" y="11" width="1" height="1" fill="#8a7800" shape-rendering="crispEdges"/><rect x="6" y="11" width="1" height="1" fill="#8a7800" shape-rendering="crispEdges"/><rect x="7" y="11" width="1" height="1" fill="#8a7800" shape-rendering="crispEdges"/><rect x="8" y="11" width="1" height="1" fill="#000" shape-rendering="crispEdges"/><rect x="10" y="11" width="1" height="1" fill="#8a7800" shape-rendering="crispEdges"/><rect x="11" y="11" width="1" height="1" fill="#000" shape-rendering="crispEdges"/><rect x="12" y="11" width="1" height="1" fill="#8a7800" shape-rendering="crispEdges"/><rect x="13" y="11" width="1" height="1" fill="#8a7800" shape-rendering="crispEdges"/><rect x="11" y="12" width="1" height="1" fill="#000" shape-rendering="crispEdges"/><rect x="6" y="13" width="1" height="1" fill="#000" shape-rendering="crispEdges"/><rect x="7" y="13" width="1" height="1" fill="#8a7800" shape-rendering="crispEdges"/><rect x="8" y="13" width="1" height="1" fill="#8a7800" shape-rendering="crispEdges"/><rect x="10" y="13" width="1" height="1" fill="#000" shape-rendering="crispEdges"/><rect x="11" y="13" width="1" height="1" fill="#000" shape-rendering="crispEdges"/><rect x="12" y="13" width="1" height="1" fill="#000" shape-rendering="crispEdges"/><rect x="13" y="13" width="1" height="1" fill="#8a7800" shape-rendering="crispEdges"/><rect x="14" y="13" width="1" height="1" fill="#8a7800" shape-rendering="crispEdges"/><rect x="15" y="13" width="1" height="1" fill="#000" shape-rendering="crispEdges"/><rect x="6" y="14" width="1" height="1" fill="#8a7800" shape-rendering="crispEdges"/><rect x="7" y="14" width="1" height="1" fill="#8a7800" shape-rendering="crispEdges"/><rect x="8" y="14" width="1" height="1" fill="#8a7800" shape-rendering="crispEdges"/><rect x="9" y="14" width="1" height="1" fill="#000" shape-rendering="crispEdges"/><rect x="10" y="14" width="1" height="1" fill="#8a7800" shape-rendering="crispEdges"/><rect x="13" y="14" width="1" height="1" fill="#000" shape-rendering="crispEdges"/><rect x="14" y="14" width="1" height="1" fill="#000" shape-rendering="crispEdges"/><rect x="15" y="14" width="1" height="1" fill="#8a7800" shape-rendering="crispEdges"/><rect x="7" y="15" width="1" height="1" fill="#8a7800" shape-rendering="crispEdges"/><rect x="8" y="15" width="1" height="1" fill="#8a7800" shape-rendering="crispEdges"/><rect x="11" y="15" width="1" height="1" fill="#8a7800" shape-rendering="crispEdges"/><rect x="12" y="15" width="1" height="1" fill="#000" shape-rendering="crispEdges"/><rect x="13" y="15" width="1" height="1" fill="#8a7800" shape-rendering="crispEdges"/><rect x="14" y="15" width="1" height="1" fill="#8a7800" shape-rendering="crispEdges"/><rect x="15" y="15" width="1" height="1" fill="#000" shape-rendering="crispEdges"/></svg>
<svg style="left:82px;top:338px" width="16" height="16" viewBox="0 0 16 16" shape-rendering="crispEdges"><ellipse cx="7.200" cy="4.600" rx="6.200" ry="3.900" fill="#fff" stroke="#000" stroke-width="1.200"/><path d="M1 5l2.500 2.500M1 5l2.500-2" stroke="#000" fill="none" stroke-width="1" shape-rendering="geometricPrecision"/><path d="M6 8l1.500 2.500l1.500-3l2 1.500l2-2.500l.5 3.500l2 1l-2 1.500l1 2.500l-2.500-.5l-1 2l-1.500-2l-2.500 1.500l.5-3l-2.500-1l2-1.500z" stroke="#000" fill="#ffe800" stroke-width="0.8" shape-rendering="geometricPrecision"/><circle cx="10.5" cy="10" r="1.4" stroke="#000" fill="#fff" stroke-width="0.8"/></svg>
<svg style="left:101px;top:356px" width="16" height="16" viewBox="0 0 16 16" shape-rendering="crispEdges"><path d="M2.500 1.500h9l2 1.500v3l-2 1.500h-9z" stroke="#808000" fill="#ffff80" stroke-width="1"  shape-rendering="crispEdges"/><circle cx="11" cy="4.5" r="0.8" stroke="#000" fill="#fff" stroke-width="0.7"/><path d="M13.500 4.500q2 0 1.500 2.500v2.500h-13" stroke="#000" fill="none" stroke-width="1" shape-rendering="geometricPrecision"/><path d="M1.5 14.500q-.5-3 3-3" stroke="#000" fill="none" stroke-width="1.3" shape-rendering="geometricPrecision"/><path d="M6 14.500q-.5-3 3-3" stroke="#000" fill="none" stroke-width="1.3" shape-rendering="geometricPrecision"/><path d="M10.5 14.500q-.5-3 3-3" stroke="#000" fill="none" stroke-width="1.3" shape-rendering="geometricPrecision"/></svg>
<svg style="left:101px;top:374px" width="16" height="16" viewBox="0 0 16 16" shape-rendering="crispEdges"><ellipse cx="8" cy="4" rx="6.500" ry="3" fill="#ffff60" stroke="#000" stroke-width="1.100"/><path d="M1.500 4.500v3.500q1 2 3.500 2.500v2.500q0 1.500 3 1.500t3-1.500v-2.500q2.500-.5 3.500-2.500v-3.500q-2 3-6.500 3t-6.500-3z" stroke="#000" fill="#ffe800" stroke-width="1" shape-rendering="geometricPrecision"/><ellipse cx="8" cy="4" rx="3.500" ry="1.300" fill="#fff" stroke="#806000" stroke-width=".7"/><path d="M6.500 9v4M9.500 9v4M5 11h6" stroke="#000" fill="none" stroke-width="1" shape-rendering="geometricPrecision"/></svg>
<svg style="left:101px;top:392px" width="16" height="16" viewBox="0 0 16 16" shape-rendering="crispEdges"><ellipse cx="8" cy="4" rx="6.500" ry="3" fill="#ffff60" stroke="#000" stroke-width="1.100"/><path d="M1.500 4.500v3.500q1 2 3.500 2.500v2.500q0 1.500 3 1.500t3-1.500v-2.500q2.500-.5 3.500-2.500v-3.500q-2 3-6.500 3t-6.500-3z" stroke="#000" fill="#ffe800" stroke-width="1" shape-rendering="geometricPrecision"/><ellipse cx="8" cy="4" rx="3.500" ry="1.300" fill="#fff" stroke="#806000" stroke-width=".7"/><path d="M6.500 9v4M9.500 9v4M5 11h6" stroke="#000" fill="none" stroke-width="1" shape-rendering="geometricPrecision"/></svg>
<svg style="left:62px;top:410px" width="16" height="16" viewBox="0 0 16 16" shape-rendering="crispEdges"><path d="M5 .500h5.500v15h-5.500z" stroke="#000" fill="#b0b0b0" stroke-width="1.2"  shape-rendering="crispEdges"/><path d="M.5 3.500h4.500M.5 7.500h4.500M.5 11.500h4.500M10.500 3.500h5M10.500 7.500h5M10.500 11.500h5" stroke="#000" fill="none" stroke-width="1.4"  shape-rendering="crispEdges"/></svg>
<div class="a" style="left:306px;top:175px;width:484px;height:481px;background:#fff;border-left:2px solid #696969;border-top:1px solid #696969"></div>
<div class="a" style="left:308px;top:176px;width:49px;height:100px;background:#f0f0f0;border-right:1px solid #a0a0a0"></div>
<div class="a" style="left:308px;top:276px;width:49px;height:1px;background:#a0a0a0"></div>
<div class="a" style="left:357px;top:278px;width:433px;height:1px;background:#e8e8e8"></div>
<div class="a" style="left:361px;top:176px;width:1px;height:56px;background:#1e6b1e"></div>
<div class="a" style="left:362px;top:181px;width:8px;height:49px;background:#228222"></div>
<div class="a" style="left:370px;top:181px;width:420px;height:49px;background:#ffff00"></div>
<div class="a" style="left:359px;top:233px;width:108px;height:3px;background:repeating-linear-gradient(135deg,#000 0 1px,#fff 1px 2.83px)"></div>
<div class="a" style="left:359px;top:279px;width:108px;height:3px;background:repeating-linear-gradient(135deg,#000 0 1px,#fff 1px 2.83px)"></div>
<div class="a" style="left:359px;top:233px;width:3px;height:49px;background:repeating-linear-gradient(135deg,#000 0 1px,#fff 1px 2.83px)"></div>
<div class="a" style="left:464px;top:233px;width:3px;height:49px;background:repeating-linear-gradient(135deg,#000 0 1px,#fff 1px 2.83px)"></div>
<div class="a" style="left:566px;top:236px;width:1px;height:1px;background:#c0c0c0"></div>
<div class="a" style="left:566px;top:278px;width:1px;height:1px;background:#c0c0c0"></div>
<div class="a" style="left:668px;top:236px;width:1px;height:1px;background:#c0c0c0"></div>
<div class="a" style="left:668px;top:278px;width:1px;height:1px;background:#c0c0c0"></div>
<div class="a" style="left:770px;top:236px;width:1px;height:1px;background:#c0c0c0"></div>
<div class="a" style="left:770px;top:278px;width:1px;height:1px;background:#c0c0c0"></div>
<div class="m" style="left:311px;top:177.9px">0</div>
<div class="m" style="left:373.7px;top:182.5px">[Program Name : NewProgram1]</div>
<div class="m" style="left:373.7px;top:206.5px">[Section Name : Section1]</div>
<div class="a" style="left:391px;top:342px;width:358px;height:297px;background:#f0f0f0;border:1px solid #6b6b6b;box-shadow:0 3px 13px 1px rgba(0,0,0,0.36)"></div>
<div class="a" style="left:392px;top:343px;width:356px;height:24px;background:#fff"></div>
<svg style="left:727px;top:350px" width="11" height="11" viewBox="0 0 11 11"><path d="M0.5 0.5l10 10M10.5 0.5l-10 10" stroke="#000" stroke-width="1.1" fill="none"/></svg>
<div class="a" style="left:403px;top:380px;width:13px;height:13px;background:#fff;border:1px solid;border-color:#808080 #fff #fff #808080"></div>
<div class="a" style="left:404px;top:381px;width:11px;height:11px;border:1px solid;border-color:#404040 #e0e0e0 #e0e0e0 #404040"></div>
<svg style="left:406px;top:383px" width="7" height="7" viewBox="0 0 7 7" shape-rendering="crispEdges"><path d="M0 2v3l2 2l5-5v-3l-5 5z" fill="#000"/></svg>
<div class="m" style="left:421px;top:380.9px;color:#000">Programs</div>
<div class="a" style="left:485px;top:385px;width:249px;height:1px;background:#a0a0a0"></div>
<div class="a" style="left:485px;top:386px;width:249px;height:1px;background:#fff"></div>
<div class="m" style="left:417px;top:400.9px;color:#000">File name:</div>
<div class="a" style="left:488px;top:397px;width:218px;height:20px;background:#fff;border:1px solid;border-color:#808080 #fff #fff #808080"></div>
<div class="a" style="left:489px;top:398px;width:216px;height:18px;border:1px solid;border-color:#404040 #e0e0e0 #e0e0e0 #404040"></div>
<div class="a" style="left:491px;top:398.9px;width:213px;height:18px;overflow:hidden"><div class="m" style="left:0;top:2px;color:#000">C:\Users\CTOS\Documents\EIP\AUTOEXEC</div></div>
<div class="a" style="left:712px;top:397px;width:26px;height:21px;background:#f0f0f0;border:1px solid;border-color:#fff #696969 #696969 #fff"></div>
<div class="a" style="left:713px;top:398px;width:24px;height:19px;border:1px solid;border-color:#f0f0f0 #a0a0a0 #a0a0a0 #f0f0f0"></div>
<div class="m" style="left:716px;top:401.9px;color:#000">...</div>
<div class="m" style="left:418px;top:428.9px;color:#fff">Comment:</div>
<div class="m" style="left:417px;top:427.9px;color:#a0a0a0">Comment:</div>
<div class="a" style="left:488px;top:424px;width:218px;height:20px;background:#f0f0f0;border:1px solid;border-color:#808080 #fff #fff #808080"></div>
<div class="a" style="left:489px;top:425px;width:216px;height:18px;border:1px solid;border-color:#404040 #e0e0e0 #e0e0e0 #404040"></div>
<div class="a" style="left:403px;top:453px;width:13px;height:13px;background:#fff;border:1px solid;border-color:#808080 #fff #fff #808080"></div>
<div class="a" style="left:404px;top:454px;width:11px;height:11px;border:1px solid;border-color:#404040 #e0e0e0 #e0e0e0 #404040"></div>
<svg style="left:406px;top:456px" width="7" height="7" viewBox="0 0 7 7" shape-rendering="crispEdges"><path d="M0 2v3l2 2l5-5v-3l-5 5z" fill="#000"/></svg>
<div class="a" style="left:421px;top:451.9px;width:74px;height:18px;overflow:hidden"><div class="m" style="left:0;top:2px;color:#000">Program Index</div></div>
<div class="a" style="left:511px;top:457px;width:223px;height:1px;background:#a0a0a0"></div>
<div class="a" style="left:511px;top:458px;width:223px;height:1px;background:#fff"></div>
<div class="m" style="left:417px;top:473.9px;color:#000">File name:</div>
<div class="a" style="left:488px;top:470px;width:218px;height:20px;background:#fff;border:1px solid;border-color:#808080 #fff #fff #808080"></div>
<div class="a" style="left:489px;top:471px;width:216px;height:18px;border:1px solid;border-color:#404040 #e0e0e0 #e0e0e0 #404040"></div>
<div class="a" style="left:491px;top:471.9px;width:213px;height:18px;overflow:hidden"><div class="m" style="left:0;top:2px;color:#000">C:\Users\CTOS\Documents\EIP\PROGRAMS</div></div>
<div class="a" style="left:712px;top:470px;width:26px;height:21px;background:#f0f0f0;border:1px solid;border-color:#fff #696969 #696969 #fff"></div>
<div class="a" style="left:713px;top:471px;width:24px;height:19px;border:1px solid;border-color:#f0f0f0 #a0a0a0 #a0a0a0 #f0f0f0"></div>
<div class="m" style="left:716px;top:474.9px;color:#000">...</div>
<div class="a" style="left:403px;top:500px;width:13px;height:13px;background:#fff;border:1px solid;border-color:#808080 #fff #fff #808080"></div>
<div class="a" style="left:404px;top:501px;width:11px;height:11px;border:1px solid;border-color:#404040 #e0e0e0 #e0e0e0 #404040"></div>
<svg style="left:406px;top:503px" width="7" height="7" viewBox="0 0 7 7" shape-rendering="crispEdges"><path d="M0 2v3l2 2l5-5v-3l-5 5z" fill="#000"/></svg>
<div class="m" style="left:421px;top:500.9px;color:#000">Symbols</div>
<div class="a" style="left:484px;top:505px;width:250px;height:1px;background:#a0a0a0"></div>
<div class="a" style="left:484px;top:506px;width:250px;height:1px;background:#fff"></div>
<div class="m" style="left:417px;top:520.9px;color:#000">File name:</div>
<div class="a" style="left:488px;top:517px;width:218px;height:20px;background:#fff;border:1px solid;border-color:#808080 #fff #fff #808080"></div>
<div class="a" style="left:489px;top:518px;width:216px;height:18px;border:1px solid;border-color:#404040 #e0e0e0 #e0e0e0 #404040"></div>
<div class="a" style="left:491px;top:518.9px;width:213px;height:18px;overflow:hidden"><div class="m" style="left:0;top:2px;color:#000">C:\Users\CTOS\Documents\EIP\SYMBOLS.</div></div>
<div class="a" style="left:712px;top:517px;width:26px;height:21px;background:#f0f0f0;border:1px solid;border-color:#fff #696969 #696969 #fff"></div>
<div class="a" style="left:713px;top:518px;width:24px;height:19px;border:1px solid;border-color:#f0f0f0 #a0a0a0 #a0a0a0 #f0f0f0"></div>
<div class="m" style="left:716px;top:521.9px;color:#000">...</div>
<div class="a" style="left:403px;top:546px;width:13px;height:13px;background:#fff;border:1px solid;border-color:#808080 #fff #fff #808080"></div>
<div class="a" style="left:404px;top:547px;width:11px;height:11px;border:1px solid;border-color:#404040 #e0e0e0 #e0e0e0 #404040"></div>
<svg style="left:406px;top:549px" width="7" height="7" viewBox="0 0 7 7" shape-rendering="crispEdges"><path d="M0 2v3l2 2l5-5v-3l-5 5z" fill="#000"/></svg>
<div class="m" style="left:421px;top:546.9px;color:#000">Program comments</div>
<div class="a" style="left:526px;top:550px;width:208px;height:1px;background:#a0a0a0"></div>
<div class="a" style="left:526px;top:551px;width:208px;height:1px;background:#fff"></div>
<div class="m" style="left:417px;top:580.9px;color:#000">File name:</div>
<div class="a" style="left:488px;top:577px;width:218px;height:20px;background:#fff;border:1px solid;border-color:#808080 #fff #fff #808080"></div>
<div class="a" style="left:489px;top:578px;width:216px;height:18px;border:1px solid;border-color:#404040 #e0e0e0 #e0e0e0 #404040"></div>
<div class="a" style="left:491px;top:578.9px;width:213px;height:18px;overflow:hidden"><div class="m" style="left:0;top:2px;color:#000">C:\Users\CTOS\Documents\EIP\COMMENTS</div></div>
<div class="a" style="left:712px;top:577px;width:26px;height:21px;background:#f0f0f0;border:1px solid;border-color:#fff #696969 #696969 #fff"></div>
<div class="a" style="left:713px;top:578px;width:24px;height:19px;border:1px solid;border-color:#f0f0f0 #a0a0a0 #a0a0a0 #f0f0f0"></div>
<div class="m" style="left:716px;top:581.9px;color:#000">...</div>
<div class="a" style="left:582px;top:607px;width:75px;height:21px;background:#f0f0f0;border:1px solid;border-color:#fff #696969 #696969 #fff"></div>
<div class="a" style="left:583px;top:608px;width:73px;height:19px;border:1px solid;border-color:#f0f0f0 #a0a0a0 #a0a0a0 #f0f0f0"></div>
<div class="m" style="left:612px;top:611.9px;color:#000">OK</div>
<div class="a" style="left:664px;top:607px;width:75px;height:21px;background:#f0f0f0;border:1px solid;border-color:#fff #696969 #696969 #fff"></div>
<div class="a" style="left:665px;top:608px;width:73px;height:19px;border:1px solid;border-color:#f0f0f0 #a0a0a0 #a0a0a0 #f0f0f0"></div>
<div class="m" style="left:683.5px;top:611.9px;color:#000">Cancel</div>
<div class="a" style="left:393px;top:367px;width:28px;height:208px;border:3px solid #f0961e"></div>
<div class="a" style="left:708px;top:394px;width:32px;height:27px;border:3px solid #f0961e"></div>
<div class="a" style="left:579px;top:602px;width:80px;height:28px;border:3px solid #f0961e"></div>
<div class="a" style="left:392.2px;top:574.9px;width:30px;height:30px;background:#f0961e;border-radius:50%;font-size:21.5px;line-height:28px;text-align:center;color:#000"><span style="display:inline-block;transform:scaleX(.9)">1</span></div>
<div class="a" style="left:740.1px;top:393.9px;width:30px;height:30px;background:#f0961e;border-radius:50%;font-size:21.5px;line-height:28px;text-align:center;color:#000"><span style="display:inline-block;transform:scaleX(.9)">2</span></div>
<div class="a" style="left:658.9px;top:602px;width:30px;height:30px;background:#f0961e;border-radius:50%;font-size:21.5px;line-height:28px;text-align:center;color:#000"><span style="display:inline-block;transform:scaleX(.9)">3</span></div>
<div class="t" style="left:22.8px;top:16.8px;color:#9a9a9a;font-size:12px;transform:scaleX(0.9847);">MM_Camera - CX-Programmer - [MM_Camera_CX.NewProgram1.Section1 [Diagram]]</div>
<div class="t" style="left:29.1px;top:37.8px;color:#4a4a4a;font-size:12px;transform:scaleX(1.0029);">File</div>
<div class="t" style="left:61.1px;top:37.8px;color:#4a4a4a;font-size:12px;transform:scaleX(1.0489);">Edit</div>
<div class="t" style="left:95.0px;top:37.8px;color:#4a4a4a;font-size:12px;transform:scaleX(1.0234);">View</div>
<div class="t" style="left:134.5px;top:37.8px;color:#4a4a4a;font-size:12px;transform:scaleX(0.9961);">Insert</div>
<div class="t" style="left:177.1px;top:37.8px;color:#4a4a4a;font-size:12px;transform:scaleX(0.9467);">PLC</div>
<div class="t" style="left:212.7px;top:37.8px;color:#4a4a4a;font-size:12px;transform:scaleX(0.9953);">Program</div>
<div class="t" style="left:272.6px;top:37.8px;color:#4a4a4a;font-size:12px;transform:scaleX(1.0262);">Simulation</div>
<div class="t" style="left:343.5px;top:37.8px;color:#4a4a4a;font-size:12px;transform:scaleX(1.0209);">Tools</div>
<div class="t" style="left:385.3px;top:37.8px;color:#4a4a4a;font-size:12px;transform:scaleX(1.0565);">Window</div>
<div class="t" style="left:443.8px;top:37.8px;color:#4a4a4a;font-size:12px;transform:scaleX(0.9924);">Help</div>
<div class="t" style="left:44.7px;top:195.8px;color:#1a1a1a;font-size:12px;transform:scaleX(1.0039);">NewProject</div>
<div class="t" style="left:63.5px;top:213.8px;color:#1a1a1a;font-size:12px;transform:scaleX(0.9738);">MM_Camera_CX[CJ2H] Offline</div>
<div class="t" style="left:82.7px;top:231.8px;color:#1a1a1a;font-size:12px;transform:scaleX(0.9672);">Data Types</div>
<div class="t" style="left:82.7px;top:249.8px;color:#1a1a1a;font-size:12px;transform:scaleX(0.9888);">Symbols</div>
<div class="t" style="left:82.7px;top:267.8px;color:#1a1a1a;font-size:12px;transform:scaleX(0.9858);">IO Table and Unit Setup</div>
<div class="t" style="left:82.7px;top:285.8px;color:#1a1a1a;font-size:12px;transform:scaleX(0.9779);">Settings</div>
<div class="t" style="left:82.7px;top:303.8px;color:#1a1a1a;font-size:12px;transform:scaleX(1.0497);">Memory</div>
<div class="t" style="left:82.7px;top:321.8px;color:#1a1a1a;font-size:12px;transform:scaleX(0.9901);">Programs</div>
<div class="t" style="left:101.8px;top:339.8px;color:#1a1a1a;font-size:12px;transform:scaleX(0.9795);">NewProgram1 (00)</div>
<div class="t" style="left:120.7px;top:357.8px;color:#1a1a1a;font-size:12px;transform:scaleX(0.9888);">Symbols</div>
<div class="t" style="left:120.7px;top:375.8px;color:#1a1a1a;font-size:12px;transform:scaleX(0.9593);">Section1</div>
<div class="t" style="left:120.7px;top:393.8px;color:#1a1a1a;font-size:12px;transform:scaleX(0.9312);">END</div>
<div class="t" style="left:82.7px;top:411.8px;color:#1a1a1a;font-size:12px;transform:scaleX(0.9964);">Function Blocks</div>
<div class="t" style="left:394.6px;top:348.8px;color:#000;font-size:12px;transform:scaleX(1.0072);">Transfer from file</div>
</body></html>
